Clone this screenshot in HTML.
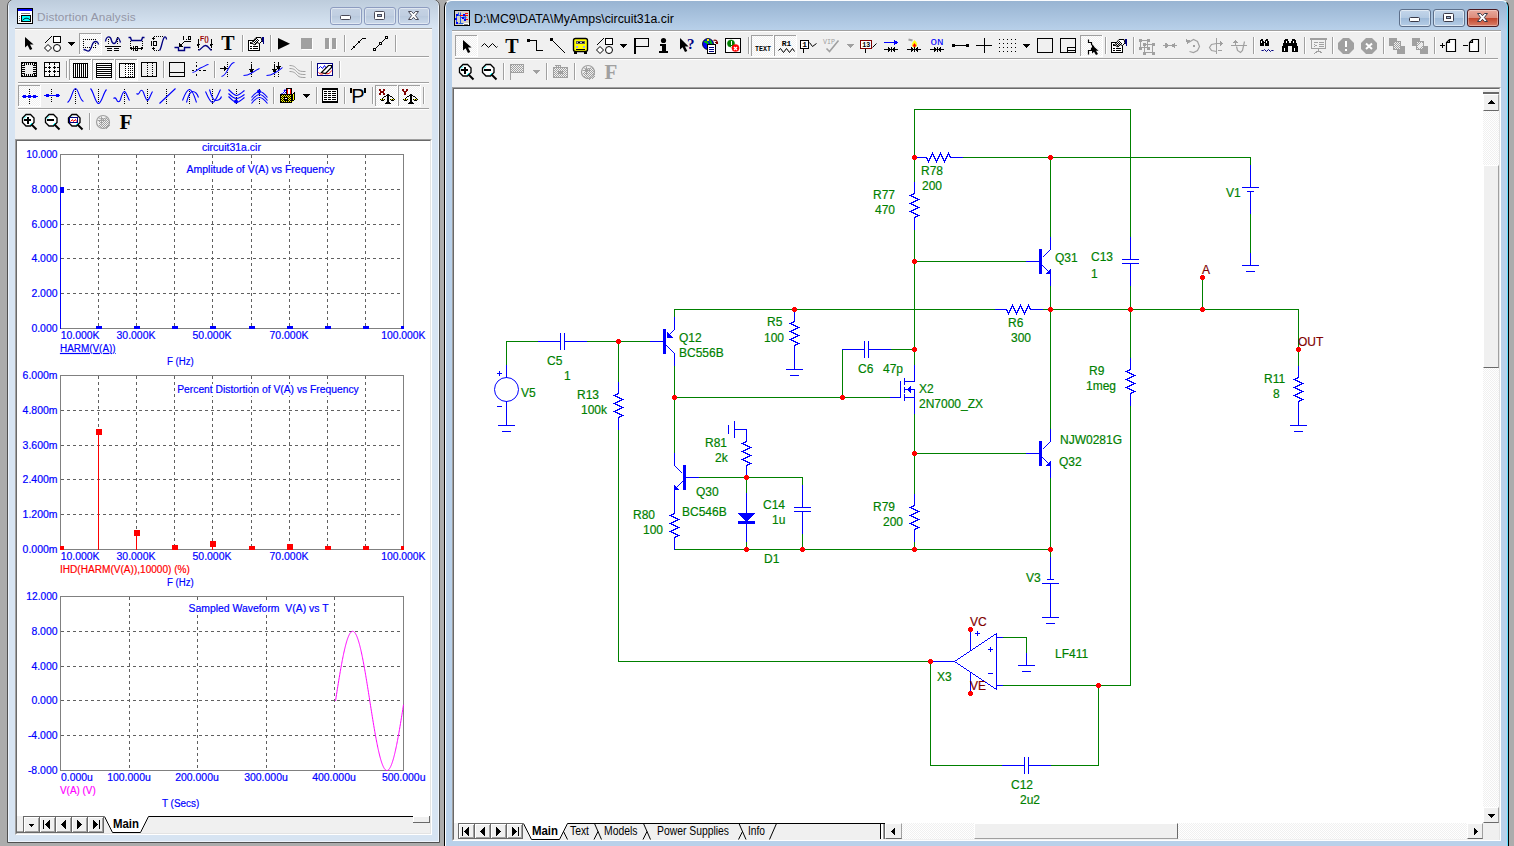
<!DOCTYPE html><html><head><meta charset="utf-8"><title>Micro-Cap</title><style>
*{box-sizing:border-box}
html,body{margin:0;padding:0}
body{width:1514px;height:846px;background:#acacac;overflow:hidden;position:relative;font-family:"Liberation Sans",sans-serif}
.abs{position:absolute}
#lw{left:7px;top:-1px;width:433px;height:844px;border:1px solid #505050;border-radius:7px 7px 0 0;background:#d7e4f2;box-shadow:inset 0 0 0 1px #eef4fc}
#lwt{left:1px;top:0;width:429px;height:29px;background:linear-gradient(#bdccdc,#d9e6f4);border-radius:5px 5px 0 0}
#rw{left:444px;top:0px;width:1065px;height:860px;border:1px solid #000;border-top-color:#fafcfe;border-radius:7px 7px 0 0;background:#b9d1ea;box-shadow:inset 1px 0 0 #fff,inset -1px 0 0 #5fe0ff}
#rwt{left:1px;top:0;width:1061px;height:30px;background:linear-gradient(#98b4d2,#b9d1ea);border-radius:6px 6px 0 0}
.tb{background:#f0f0f0}
.ttl{font-size:12px;white-space:nowrap}
.cb{border:1px solid #7b8aa0;border-radius:3px}
.sbtn{background:#f0f0f0;border:1px solid;border-color:#fff #a0a0a0 #696969 #fff}
.nbtn{background:#f0f0f0;border:1px solid #696969;box-shadow:inset 1px 1px 0 #fff,inset -1px -1px 0 #a0a0a0}
.track{background-color:#f7f7f7;background-image:conic-gradient(#fff 25%,#f0f0f0 0 50%,#fff 0 75%,#f0f0f0 0);background-size:2px 2px}
</style></head><body>
<div id="lw" class="abs"><div id="lwt" class="abs"></div></div>
<div class="abs ttl" style="left:37px;top:10px;color:#9496a6;font-size:11.8px;letter-spacing:0.12px">Distortion Analysis</div>
<div class="abs cb" style="left:330px;top:7px;width:32px;height:18px;background:linear-gradient(#c6d3e4,#c0cee1 50%,#b9c9dd 50%,#cbd9ea);border-color:#8d9cc0;box-shadow:inset 0 0 0 1px rgba(255,255,255,.45)"></div>
<div class="abs cb" style="left:364px;top:7px;width:32px;height:18px;background:linear-gradient(#c6d3e4,#c0cee1 50%,#b9c9dd 50%,#cbd9ea);border-color:#8d9cc0;box-shadow:inset 0 0 0 1px rgba(255,255,255,.45)"></div>
<div class="abs cb" style="left:398px;top:7px;width:32px;height:18px;background:linear-gradient(#c6d3e4,#c0cee1 50%,#b9c9dd 50%,#cbd9ea);border-color:#8d9cc0;box-shadow:inset 0 0 0 1px rgba(255,255,255,.45)"></div>
<div class="abs tb" style="left:15px;top:28px;width:417px;height:807px;border-top:1px solid #a0a0a0;box-shadow:inset 0 1px 0 #fff"></div>
<div class="abs" style="left:18px;top:56px;width:411px;height:2px;background:#a0a0a0;border-bottom:1px solid #fff"></div>
<div class="abs" style="left:18px;top:82px;width:411px;height:2px;background:#a0a0a0;border-bottom:1px solid #fff"></div>
<div class="abs" style="left:18px;top:108px;width:411px;height:2px;background:#a0a0a0;border-bottom:1px solid #fff"></div>
<div class="abs" style="left:15px;top:139px;width:417px;height:696px;background:#fff;border:1px solid;border-color:#a0a0a0 #fff #fff #a0a0a0"></div>
<div class="abs" style="left:16px;top:140px;width:415px;height:694px;border:1px solid;border-color:#696969 #e3e3e3 #e3e3e3 #696969"></div>
<div class="abs tb" style="left:17px;top:816px;width:413px;height:17px"></div>
<div class="abs nbtn" style="left:23px;top:816px;width:17px;height:17px"></div>
<div class="abs nbtn" style="left:39px;top:816px;width:17px;height:17px"></div>
<div class="abs nbtn" style="left:55px;top:816px;width:17px;height:17px"></div>
<div class="abs nbtn" style="left:71px;top:816px;width:17px;height:17px"></div>
<div class="abs nbtn" style="left:87px;top:816px;width:17px;height:17px"></div>
<div id="rw" class="abs"><div id="rwt" class="abs"></div></div>
<div class="abs ttl" style="left:474px;top:12px;color:#000;font-size:12.3px">D:\MC9\DATA\MyAmps\circuit31a.cir</div>
<div class="abs cb" style="left:1399px;top:9px;width:32px;height:18px;background:linear-gradient(#c4d6ea,#b2c9e2 50%,#9db9d8 50%,#b6cde6);border-color:#5d6f8a;box-shadow:inset 0 0 0 1px rgba(255,255,255,.5)"></div>
<div class="abs cb" style="left:1433px;top:9px;width:32px;height:18px;background:linear-gradient(#c4d6ea,#b2c9e2 50%,#9db9d8 50%,#b6cde6);border-color:#5d6f8a;box-shadow:inset 0 0 0 1px rgba(255,255,255,.5)"></div>
<div class="abs cb" style="left:1467px;top:9px;width:32px;height:18px;background:linear-gradient(#e9a99c,#dc8a79 50%,#c2442a 50%,#d9806a);border-color:#4a1a22;box-shadow:inset 0 0 0 1px rgba(255,255,255,.35)"></div>
<div class="abs tb" style="left:452px;top:30px;width:1049px;height:811px;border-top:1px solid #a0a0a0;border-bottom:1px solid #fff;box-shadow:inset 0 1px 0 #fff"></div>
<div class="abs" style="left:455px;top:58px;width:1043px;height:2px;background:#a0a0a0;border-bottom:1px solid #fff"></div>
<div class="abs" style="left:452px;top:87px;width:1049px;height:754px;background:#fff;border:1px solid;border-color:#a0a0a0 #fff #fff #a0a0a0"></div>
<div class="abs" style="left:453px;top:88px;width:1047px;height:752px;border:1px solid;border-color:#696969 #e3e3e3 #e3e3e3 #696969"></div>
<div class="abs track" style="left:1483px;top:89px;width:16px;height:734px"></div>
<div class="abs" style="left:1483px;top:89px;width:16px;height:5px;background:#f0f0f0;border-bottom:2px solid #696969;border-top:1px solid #fff"></div>
<div class="abs sbtn" style="left:1483px;top:94px;width:16px;height:17px"></div>
<div class="abs sbtn" style="left:1483px;top:165px;width:16px;height:203px"></div>
<div class="abs sbtn" style="left:1483px;top:807px;width:16px;height:16px"></div>
<div class="abs tb" style="left:454px;top:823px;width:1045px;height:17px"></div>
<div class="abs nbtn" style="left:458px;top:823px;width:17px;height:16px"></div>
<div class="abs nbtn" style="left:474px;top:823px;width:17px;height:16px"></div>
<div class="abs nbtn" style="left:490px;top:823px;width:17px;height:16px"></div>
<div class="abs nbtn" style="left:506px;top:823px;width:17px;height:16px"></div>
<div class="abs track" style="left:885px;top:823px;width:598px;height:16px"></div>
<div class="abs sbtn" style="left:885px;top:823px;width:17px;height:16px"></div>
<div class="abs sbtn" style="left:1467px;top:823px;width:16px;height:16px"></div>
<div class="abs sbtn" style="left:974px;top:823px;width:204px;height:16px;border-color:#fff #696969 #a0a0a0 #fff"></div>
<svg class="abs" style="left:0;top:0" width="1514" height="846" viewBox="0 0 1514 846">
<g shape-rendering="crispEdges"><line x1="98.5" y1="155" x2="98.5" y2="328" stroke="#606060" stroke-width="1" stroke-dasharray="3 3"/><line x1="136.5" y1="155" x2="136.5" y2="328" stroke="#606060" stroke-width="1" stroke-dasharray="3 3"/><line x1="174.5" y1="155" x2="174.5" y2="328" stroke="#606060" stroke-width="1" stroke-dasharray="3 3"/><line x1="212.5" y1="155" x2="212.5" y2="328" stroke="#606060" stroke-width="1" stroke-dasharray="3 3"/><line x1="251.5" y1="155" x2="251.5" y2="328" stroke="#606060" stroke-width="1" stroke-dasharray="3 3"/><line x1="289.5" y1="155" x2="289.5" y2="328" stroke="#606060" stroke-width="1" stroke-dasharray="3 3"/><line x1="327.5" y1="155" x2="327.5" y2="328" stroke="#606060" stroke-width="1" stroke-dasharray="3 3"/><line x1="365.5" y1="155" x2="365.5" y2="328" stroke="#606060" stroke-width="1" stroke-dasharray="3 3"/><line x1="61" y1="189.5" x2="403" y2="189.5" stroke="#606060" stroke-width="1" stroke-dasharray="3 3"/><line x1="61" y1="224.5" x2="403" y2="224.5" stroke="#606060" stroke-width="1" stroke-dasharray="3 3"/><line x1="61" y1="258.5" x2="403" y2="258.5" stroke="#606060" stroke-width="1" stroke-dasharray="3 3"/><line x1="61" y1="293.5" x2="403" y2="293.5" stroke="#606060" stroke-width="1" stroke-dasharray="3 3"/><rect x="60.5" y="154.5" width="343" height="174" fill="none" stroke="#808080" stroke-width="1"/><line x1="98.5" y1="376" x2="98.5" y2="549" stroke="#606060" stroke-width="1" stroke-dasharray="3 3"/><line x1="136.5" y1="376" x2="136.5" y2="549" stroke="#606060" stroke-width="1" stroke-dasharray="3 3"/><line x1="174.5" y1="376" x2="174.5" y2="549" stroke="#606060" stroke-width="1" stroke-dasharray="3 3"/><line x1="212.5" y1="376" x2="212.5" y2="549" stroke="#606060" stroke-width="1" stroke-dasharray="3 3"/><line x1="251.5" y1="376" x2="251.5" y2="549" stroke="#606060" stroke-width="1" stroke-dasharray="3 3"/><line x1="289.5" y1="376" x2="289.5" y2="549" stroke="#606060" stroke-width="1" stroke-dasharray="3 3"/><line x1="327.5" y1="376" x2="327.5" y2="549" stroke="#606060" stroke-width="1" stroke-dasharray="3 3"/><line x1="365.5" y1="376" x2="365.5" y2="549" stroke="#606060" stroke-width="1" stroke-dasharray="3 3"/><line x1="61" y1="410.5" x2="403" y2="410.5" stroke="#606060" stroke-width="1" stroke-dasharray="3 3"/><line x1="61" y1="445.5" x2="403" y2="445.5" stroke="#606060" stroke-width="1" stroke-dasharray="3 3"/><line x1="61" y1="479.5" x2="403" y2="479.5" stroke="#606060" stroke-width="1" stroke-dasharray="3 3"/><line x1="61" y1="514.5" x2="403" y2="514.5" stroke="#606060" stroke-width="1" stroke-dasharray="3 3"/><rect x="60.5" y="375.5" width="343" height="174" fill="none" stroke="#808080" stroke-width="1"/><line x1="129.5" y1="597" x2="129.5" y2="770" stroke="#606060" stroke-width="1" stroke-dasharray="3 3"/><line x1="197.5" y1="597" x2="197.5" y2="770" stroke="#606060" stroke-width="1" stroke-dasharray="3 3"/><line x1="266.5" y1="597" x2="266.5" y2="770" stroke="#606060" stroke-width="1" stroke-dasharray="3 3"/><line x1="334.5" y1="597" x2="334.5" y2="770" stroke="#606060" stroke-width="1" stroke-dasharray="3 3"/><line x1="61" y1="631.5" x2="403" y2="631.5" stroke="#606060" stroke-width="1" stroke-dasharray="3 3"/><line x1="61" y1="666.5" x2="403" y2="666.5" stroke="#606060" stroke-width="1" stroke-dasharray="3 3"/><line x1="61" y1="700.5" x2="403" y2="700.5" stroke="#606060" stroke-width="1" stroke-dasharray="3 3"/><line x1="61" y1="735.5" x2="403" y2="735.5" stroke="#606060" stroke-width="1" stroke-dasharray="3 3"/><rect x="60.5" y="596.5" width="343" height="174" fill="none" stroke="#808080" stroke-width="1"/><clipPath id="c1"><rect x="60" y="154" width="344" height="175"/></clipPath><g clip-path="url(#c1)"><rect x="60" y="190" width="1" height="139" fill="#0000ff"/><rect x="58" y="187" width="6" height="6" fill="#0000ff"/><rect x="96" y="326" width="6" height="6" fill="#0000ff"/><rect x="134" y="326" width="6" height="6" fill="#0000ff"/><rect x="172" y="326" width="6" height="6" fill="#0000ff"/><rect x="210" y="326" width="6" height="6" fill="#0000ff"/><rect x="249" y="326" width="6" height="6" fill="#0000ff"/><rect x="287" y="326" width="6" height="6" fill="#0000ff"/><rect x="325" y="326" width="6" height="6" fill="#0000ff"/><rect x="363" y="326" width="6" height="6" fill="#0000ff"/><rect x="401" y="326" width="6" height="6" fill="#0000ff"/></g><clipPath id="c2"><rect x="60" y="375" width="344" height="175"/></clipPath><g clip-path="url(#c2)"><rect x="60" y="549" width="1" height="1" fill="#ff0000"/><rect x="58" y="546" width="6" height="6" fill="#ff0000"/><rect x="98" y="432" width="1" height="118" fill="#ff0000"/><rect x="96" y="429" width="6" height="6" fill="#ff0000"/><rect x="136" y="533" width="1" height="17" fill="#ff0000"/><rect x="134" y="530" width="6" height="6" fill="#ff0000"/><rect x="174" y="548" width="1" height="2" fill="#ff0000"/><rect x="172" y="545" width="6" height="6" fill="#ff0000"/><rect x="212" y="544" width="1" height="6" fill="#ff0000"/><rect x="210" y="541" width="6" height="6" fill="#ff0000"/><rect x="251" y="549" width="1" height="1" fill="#ff0000"/><rect x="249" y="546" width="6" height="6" fill="#ff0000"/><rect x="289" y="547" width="1" height="3" fill="#ff0000"/><rect x="287" y="544" width="6" height="6" fill="#ff0000"/><rect x="327" y="549" width="1" height="1" fill="#ff0000"/><rect x="325" y="546" width="6" height="6" fill="#ff0000"/><rect x="365" y="549" width="1" height="1" fill="#ff0000"/><rect x="363" y="546" width="6" height="6" fill="#ff0000"/><rect x="403" y="549" width="1" height="1" fill="#ff0000"/><rect x="401" y="546" width="6" height="6" fill="#ff0000"/></g><polyline points="335.50,700.90 335.75,699.31 336.00,697.71 336.25,696.12 336.50,694.53 336.75,692.95 337.00,691.37 337.25,689.79 337.50,688.22 337.75,686.66 338.00,685.10 338.25,683.55 338.50,682.02 338.75,680.49 339.00,678.97 339.25,677.46 339.50,675.97 339.75,674.49 340.00,673.02 340.25,671.57 340.50,670.13 340.75,668.71 341.00,667.30 341.25,665.92 341.50,664.55 341.75,663.20 342.00,661.87 342.25,660.56 342.50,659.27 342.75,658.01 343.00,656.76 343.25,655.54 343.50,654.34 343.75,653.17 344.00,652.02 344.25,650.90 344.50,649.81 344.75,648.74 345.00,647.70 345.25,646.68 345.50,645.70 345.75,644.74 346.00,643.82 346.25,642.92 346.50,642.05 346.75,641.22 347.00,640.41 347.25,639.64 347.50,638.90 347.75,638.19 348.00,637.52 348.25,636.88 348.50,636.27 348.75,635.69 349.00,635.15 349.25,634.65 349.50,634.18 349.75,633.74 350.00,633.34 350.25,632.97 350.50,632.65 350.75,632.35 351.00,632.09 351.25,631.87 351.50,631.69 351.75,631.54 352.00,631.42 352.25,631.35 352.50,631.31 352.75,631.30 353.00,631.34 353.25,631.41 353.50,631.51 353.75,631.65 354.00,631.83 354.25,632.05 354.50,632.30 354.75,632.58 355.00,632.91 355.25,633.26 355.50,633.66 355.75,634.09 356.00,634.55 356.25,635.05 356.50,635.58 356.75,636.15 357.00,636.75 357.25,637.39 357.50,638.05 357.75,638.76 358.00,639.49 358.25,640.26 358.50,641.05 358.75,641.88 359.00,642.74 359.25,643.63 359.50,644.55 359.75,645.51 360.00,646.48 360.25,647.49 360.50,648.53 360.75,649.59 361.00,650.68 361.25,651.80 361.50,652.94 361.75,654.11 362.00,655.30 362.25,656.52 362.50,657.75 362.75,659.02 363.00,660.30 363.25,661.61 363.50,662.93 363.75,664.28 364.00,665.64 364.25,667.02 364.50,668.43 364.75,669.84 365.00,671.28 365.25,672.73 365.50,674.19 365.75,675.67 366.00,677.16 366.25,678.67 366.50,680.18 366.75,681.71 367.00,683.25 367.25,684.79 367.50,686.35 367.75,687.91 368.00,689.48 368.25,691.05 368.50,692.63 368.75,694.22 369.00,695.80 369.25,697.40 369.50,698.99 369.75,700.58 370.00,702.17 370.25,703.77 370.50,705.36 370.75,706.95 371.00,708.53 371.25,710.12 371.50,711.69 371.75,713.26 372.00,714.83 372.25,716.39 372.50,717.94 372.75,719.48 373.00,721.01 373.25,722.53 373.50,724.04 373.75,725.53 374.00,727.02 374.25,728.49 374.50,729.94 374.75,731.39 375.00,732.81 375.25,734.22 375.50,735.61 375.75,736.98 376.00,738.33 376.25,739.67 376.50,740.98 376.75,742.27 377.00,743.54 377.25,744.79 377.50,746.02 377.75,747.22 378.00,748.40 378.25,749.55 378.50,750.67 378.75,751.78 379.00,752.85 379.25,753.90 379.50,754.92 379.75,755.91 380.00,756.87 380.25,757.80 380.50,758.70 380.75,759.58 381.00,760.42 381.25,761.23 381.50,762.01 381.75,762.75 382.00,763.47 382.25,764.15 382.50,764.80 382.75,765.41 383.00,765.99 383.25,766.54 383.50,767.05 383.75,767.53 384.00,767.97 384.25,768.38 384.50,768.75 384.75,769.09 385.00,769.39 385.25,769.66 385.50,769.89 385.75,770.08 386.00,770.24 386.25,770.36 386.50,770.44 386.75,770.49 387.00,770.50 387.25,770.47 387.50,770.41 387.75,770.31 388.00,770.18 388.25,770.01 388.50,769.80 388.75,769.56 389.00,769.28 389.25,768.96 389.50,768.61 389.75,768.22 390.00,767.80 390.25,767.34 390.50,766.85 390.75,766.33 391.00,765.77 391.25,765.17 391.50,764.54 391.75,763.88 392.00,763.19 392.25,762.46 392.50,761.70 392.75,760.91 393.00,760.08 393.25,759.23 393.50,758.35 393.75,757.43 394.00,756.49 394.25,755.51 394.50,754.51 394.75,753.48 395.00,752.42 395.25,751.34 395.50,750.23 395.75,749.09 396.00,747.93 396.25,746.74 396.50,745.53 396.75,744.29 397.00,743.04 397.25,741.76 397.50,740.46 397.75,739.14 398.00,737.79 398.25,736.43 398.50,735.05 398.75,733.66 399.00,732.24 399.25,730.81 399.50,729.36 399.75,727.90 400.00,726.43 400.25,724.94 400.50,723.44 400.75,721.92 401.00,720.40 401.25,718.86 401.50,717.32 401.75,715.77 402.00,714.20 402.25,712.64 402.50,711.06 402.75,709.48 403.00,707.90 403.25,706.31 403.50,704.72" fill="none" stroke="#ff00ff" stroke-width="1" shape-rendering="auto"/></g><g font-family="Liberation Sans, sans-serif"><text x="57.5" y="158" fill="#0000ff" font-size="10" text-anchor="end" font-weight="normal"  textLength="31.2" lengthAdjust="spacingAndGlyphs" stroke="#0000ff" stroke-width="0.18">10.000</text><text x="57.5" y="193" fill="#0000ff" font-size="10" text-anchor="end" font-weight="normal"  textLength="26.1" lengthAdjust="spacingAndGlyphs" stroke="#0000ff" stroke-width="0.18">8.000</text><text x="57.5" y="228" fill="#0000ff" font-size="10" text-anchor="end" font-weight="normal"  textLength="26.1" lengthAdjust="spacingAndGlyphs" stroke="#0000ff" stroke-width="0.18">6.000</text><text x="57.5" y="262" fill="#0000ff" font-size="10" text-anchor="end" font-weight="normal"  textLength="26.1" lengthAdjust="spacingAndGlyphs" stroke="#0000ff" stroke-width="0.18">4.000</text><text x="57.5" y="297" fill="#0000ff" font-size="10" text-anchor="end" font-weight="normal"  textLength="26.1" lengthAdjust="spacingAndGlyphs" stroke="#0000ff" stroke-width="0.18">2.000</text><text x="57.5" y="332" fill="#0000ff" font-size="10" text-anchor="end" font-weight="normal"  textLength="26.1" lengthAdjust="spacingAndGlyphs" stroke="#0000ff" stroke-width="0.18">0.000</text><text x="57.5" y="379" fill="#0000ff" font-size="10" text-anchor="end" font-weight="normal"  textLength="34.9" lengthAdjust="spacingAndGlyphs" stroke="#0000ff" stroke-width="0.18">6.000m</text><text x="57.5" y="414" fill="#0000ff" font-size="10" text-anchor="end" font-weight="normal"  textLength="34.9" lengthAdjust="spacingAndGlyphs" stroke="#0000ff" stroke-width="0.18">4.800m</text><text x="57.5" y="449" fill="#0000ff" font-size="10" text-anchor="end" font-weight="normal"  textLength="34.9" lengthAdjust="spacingAndGlyphs" stroke="#0000ff" stroke-width="0.18">3.600m</text><text x="57.5" y="483" fill="#0000ff" font-size="10" text-anchor="end" font-weight="normal"  textLength="34.9" lengthAdjust="spacingAndGlyphs" stroke="#0000ff" stroke-width="0.18">2.400m</text><text x="57.5" y="518" fill="#0000ff" font-size="10" text-anchor="end" font-weight="normal"  textLength="34.9" lengthAdjust="spacingAndGlyphs" stroke="#0000ff" stroke-width="0.18">1.200m</text><text x="57.5" y="553" fill="#0000ff" font-size="10" text-anchor="end" font-weight="normal"  textLength="34.9" lengthAdjust="spacingAndGlyphs" stroke="#0000ff" stroke-width="0.18">0.000m</text><text x="57.5" y="600" fill="#0000ff" font-size="10" text-anchor="end" font-weight="normal"  textLength="31.2" lengthAdjust="spacingAndGlyphs" stroke="#0000ff" stroke-width="0.18">12.000</text><text x="57.5" y="635" fill="#0000ff" font-size="10" text-anchor="end" font-weight="normal"  textLength="26.1" lengthAdjust="spacingAndGlyphs" stroke="#0000ff" stroke-width="0.18">8.000</text><text x="57.5" y="670" fill="#0000ff" font-size="10" text-anchor="end" font-weight="normal"  textLength="26.1" lengthAdjust="spacingAndGlyphs" stroke="#0000ff" stroke-width="0.18">4.000</text><text x="57.5" y="704" fill="#0000ff" font-size="10" text-anchor="end" font-weight="normal"  textLength="26.1" lengthAdjust="spacingAndGlyphs" stroke="#0000ff" stroke-width="0.18">0.000</text><text x="57.5" y="739" fill="#0000ff" font-size="10" text-anchor="end" font-weight="normal"  textLength="29.6" lengthAdjust="spacingAndGlyphs" stroke="#0000ff" stroke-width="0.18">-4.000</text><text x="57.5" y="774" fill="#0000ff" font-size="10" text-anchor="end" font-weight="normal"  textLength="29.6" lengthAdjust="spacingAndGlyphs" stroke="#0000ff" stroke-width="0.18">-8.000</text><text x="60.7" y="339" fill="#0000ff" font-size="10" text-anchor="start" font-weight="normal"  textLength="38.9" lengthAdjust="spacingAndGlyphs" stroke="#0000ff" stroke-width="0.18">10.000K</text><text x="136" y="339" fill="#0000ff" font-size="10" text-anchor="middle" font-weight="normal"  textLength="38.9" lengthAdjust="spacingAndGlyphs" stroke="#0000ff" stroke-width="0.18">30.000K</text><text x="212" y="339" fill="#0000ff" font-size="10" text-anchor="middle" font-weight="normal"  textLength="38.9" lengthAdjust="spacingAndGlyphs" stroke="#0000ff" stroke-width="0.18">50.000K</text><text x="289" y="339" fill="#0000ff" font-size="10" text-anchor="middle" font-weight="normal"  textLength="38.9" lengthAdjust="spacingAndGlyphs" stroke="#0000ff" stroke-width="0.18">70.000K</text><text x="425.5" y="339" fill="#0000ff" font-size="10" text-anchor="end" font-weight="normal"  textLength="44.3" lengthAdjust="spacingAndGlyphs" stroke="#0000ff" stroke-width="0.18">100.000K</text><text x="60.7" y="560" fill="#0000ff" font-size="10" text-anchor="start" font-weight="normal"  textLength="38.9" lengthAdjust="spacingAndGlyphs" stroke="#0000ff" stroke-width="0.18">10.000K</text><text x="136" y="560" fill="#0000ff" font-size="10" text-anchor="middle" font-weight="normal"  textLength="38.9" lengthAdjust="spacingAndGlyphs" stroke="#0000ff" stroke-width="0.18">30.000K</text><text x="212" y="560" fill="#0000ff" font-size="10" text-anchor="middle" font-weight="normal"  textLength="38.9" lengthAdjust="spacingAndGlyphs" stroke="#0000ff" stroke-width="0.18">50.000K</text><text x="289" y="560" fill="#0000ff" font-size="10" text-anchor="middle" font-weight="normal"  textLength="38.9" lengthAdjust="spacingAndGlyphs" stroke="#0000ff" stroke-width="0.18">70.000K</text><text x="425.5" y="560" fill="#0000ff" font-size="10" text-anchor="end" font-weight="normal"  textLength="44.3" lengthAdjust="spacingAndGlyphs" stroke="#0000ff" stroke-width="0.18">100.000K</text><text x="61" y="781" fill="#0000ff" font-size="10" text-anchor="start" font-weight="normal"  textLength="31.8" lengthAdjust="spacingAndGlyphs" stroke="#0000ff" stroke-width="0.18">0.000u</text><text x="129" y="781" fill="#0000ff" font-size="10" text-anchor="middle" font-weight="normal"  textLength="43.6" lengthAdjust="spacingAndGlyphs" stroke="#0000ff" stroke-width="0.18">100.000u</text><text x="197" y="781" fill="#0000ff" font-size="10" text-anchor="middle" font-weight="normal"  textLength="43.6" lengthAdjust="spacingAndGlyphs" stroke="#0000ff" stroke-width="0.18">200.000u</text><text x="266" y="781" fill="#0000ff" font-size="10" text-anchor="middle" font-weight="normal"  textLength="43.6" lengthAdjust="spacingAndGlyphs" stroke="#0000ff" stroke-width="0.18">300.000u</text><text x="334" y="781" fill="#0000ff" font-size="10" text-anchor="middle" font-weight="normal"  textLength="43.6" lengthAdjust="spacingAndGlyphs" stroke="#0000ff" stroke-width="0.18">400.000u</text><text x="425.5" y="781" fill="#0000ff" font-size="10" text-anchor="end" font-weight="normal"  textLength="43.6" lengthAdjust="spacingAndGlyphs" stroke="#0000ff" stroke-width="0.18">500.000u</text><text x="231.5" y="151" fill="#0000ff" font-size="10" text-anchor="middle" font-weight="normal"  textLength="58.9" lengthAdjust="spacingAndGlyphs" stroke="#0000ff" stroke-width="0.18">circuit31a.cir</text><rect x="186" y="164" width="149" height="12" fill="#fff"/><text x="260.5" y="173" fill="#0000ff" font-size="10" text-anchor="middle" font-weight="normal"  textLength="148.0" lengthAdjust="spacingAndGlyphs" stroke="#0000ff" stroke-width="0.18">Amplitude of V(A) vs Frequency</text><rect x="177" y="384" width="183" height="12" fill="#fff"/><text x="268" y="393" fill="#0000ff" font-size="10" text-anchor="middle" font-weight="normal"  textLength="181.6" lengthAdjust="spacingAndGlyphs" stroke="#0000ff" stroke-width="0.18">Percent Distortion of V(A) vs Frequency</text><rect x="188" y="603" width="141" height="12" fill="#fff"/><text x="258.5" y="612" fill="#0000ff" font-size="10" text-anchor="middle" font-weight="normal" xml:space="preserve" textLength="140.0" lengthAdjust="spacingAndGlyphs" stroke="#0000ff" stroke-width="0.18">Sampled Waveform  V(A) vs T</text><text x="60" y="352" fill="#0000ff" font-size="10" text-anchor="start" font-weight="normal" text-decoration="underline" textLength="55.6" lengthAdjust="spacingAndGlyphs" stroke="#0000ff" stroke-width="0.18">HARM(V(A))</text><text x="167" y="365" fill="#0000ff" font-size="10" text-anchor="start" font-weight="normal"  textLength="26.7" lengthAdjust="spacingAndGlyphs" stroke="#0000ff" stroke-width="0.18">F (Hz)</text><text x="167" y="586" fill="#0000ff" font-size="10" text-anchor="start" font-weight="normal"  textLength="26.7" lengthAdjust="spacingAndGlyphs" stroke="#0000ff" stroke-width="0.18">F (Hz)</text><text x="162" y="807" fill="#0000ff" font-size="10" text-anchor="start" font-weight="normal"  textLength="37.2" lengthAdjust="spacingAndGlyphs" stroke="#0000ff" stroke-width="0.18">T (Secs)</text><text x="60" y="573" fill="#ff0000" font-size="10" text-anchor="start" font-weight="normal"  textLength="129.9" lengthAdjust="spacingAndGlyphs" stroke="#ff0000" stroke-width="0.18">IHD(HARM(V(A)),10000) (%)</text><text x="60" y="794" fill="#ff00ff" font-size="10" text-anchor="start" font-weight="normal"  textLength="35.7" lengthAdjust="spacingAndGlyphs" stroke="#ff00ff" stroke-width="0.18">V(A) (V)</text></g>
<g shape-rendering="crispEdges"><rect x="914" y="109" width="217" height="1" fill="#008000"/><rect x="914" y="109" width="1" height="73" fill="#008000"/><rect x="1130" y="109" width="1" height="129" fill="#008000"/><rect x="962" y="157" width="289" height="1" fill="#008000"/><rect x="1250" y="157" width="1" height="9" fill="#008000"/><rect x="1050" y="157" width="1" height="81" fill="#008000"/><rect x="914" y="229" width="1" height="137" fill="#008000"/><rect x="914" y="261" width="113" height="1" fill="#008000"/><rect x="1050" y="285" width="1" height="145" fill="#008000"/><rect x="1130" y="285" width="1" height="73" fill="#008000"/><rect x="1130" y="405" width="1" height="281" fill="#008000"/><rect x="674" y="309" width="321" height="1" fill="#008000"/><rect x="1042" y="309" width="257" height="1" fill="#008000"/><rect x="1298" y="309" width="1" height="57" fill="#008000"/><rect x="674" y="309" width="1" height="9" fill="#008000"/><rect x="1202" y="277" width="1" height="33" fill="#008000"/><rect x="1250" y="213" width="1" height="41" fill="#008000"/><rect x="506" y="341" width="33" height="1" fill="#008000"/><rect x="506" y="341" width="1" height="25" fill="#008000"/><rect x="586" y="341" width="65" height="1" fill="#008000"/><rect x="618" y="341" width="1" height="41" fill="#008000"/><rect x="618" y="429" width="1" height="233" fill="#008000"/><rect x="618" y="661" width="337" height="1" fill="#008000"/><rect x="674" y="365" width="1" height="89" fill="#008000"/><rect x="674" y="397" width="217" height="1" fill="#008000"/><rect x="842" y="349" width="1" height="49" fill="#008000"/><rect x="890" y="349" width="25" height="1" fill="#008000"/><rect x="914" y="413" width="1" height="81" fill="#008000"/><rect x="914" y="453" width="113" height="1" fill="#008000"/><rect x="914" y="541" width="1" height="9" fill="#008000"/><rect x="1050" y="477" width="1" height="81" fill="#008000"/><rect x="698" y="477" width="105" height="1" fill="#008000"/><rect x="802" y="477" width="1" height="9" fill="#008000"/><rect x="802" y="533" width="1" height="17" fill="#008000"/><rect x="746" y="477" width="1" height="17" fill="#008000"/><rect x="746" y="541" width="1" height="9" fill="#008000"/><rect x="674" y="549" width="377" height="1" fill="#008000"/><rect x="930" y="661" width="1" height="105" fill="#008000"/><rect x="930" y="765" width="73" height="1" fill="#008000"/><rect x="1050" y="765" width="49" height="1" fill="#008000"/><rect x="1098" y="685" width="1" height="81" fill="#008000"/><rect x="1002" y="685" width="129" height="1" fill="#008000"/><rect x="1002" y="637" width="25" height="1" fill="#008000"/><rect x="1026" y="637" width="1" height="17" fill="#008000"/><polyline points="914.5,157.5 926.5,157.5 928.5,161.5 932.5,153.5 936.5,161.5 940.5,153.5 944.5,161.5 948.5,153.5 950.5,157.5 962.5,157.5" fill="none" stroke="#0000ff" stroke-width="1"/><polyline points="914.5,181.5 914.5,193.5 910.5,195.5 918.5,199.5 910.5,203.5 918.5,207.5 910.5,211.5 918.5,215.5 914.5,217.5 914.5,229.5" fill="none" stroke="#0000ff" stroke-width="1"/><rect x="1050" y="237" width="1" height="13" fill="#0000ff"/><rect x="1050" y="273" width="1" height="13" fill="#0000ff"/><rect x="1039" y="249" width="3" height="25" fill="#0000ff"/><rect x="1026" y="261" width="14" height="1" fill="#0000ff"/><polyline points="1042.5,257.5 1050.5,249.5" fill="none" stroke="#0000ff" stroke-width="1"/><polyline points="1042.5,265.5 1050.5,273.5" fill="none" stroke="#0000ff" stroke-width="1"/><polygon points="1051,268.4 1051,274 1045.4,274" fill="#0000ff"/><rect x="1130" y="237" width="1" height="23" fill="#0000ff"/><rect x="1130" y="263" width="1" height="23" fill="#0000ff"/><rect x="1122" y="259" width="17" height="1" fill="#0000ff"/><rect x="1122" y="263" width="17" height="1" fill="#0000ff"/><rect x="1250" y="165" width="1" height="23" fill="#0000ff"/><rect x="1250" y="191" width="1" height="23" fill="#0000ff"/><rect x="1242" y="187" width="17" height="1" fill="#0000ff"/><rect x="1247" y="191" width="7" height="1" fill="#0000ff"/><rect x="1250" y="253" width="1" height="13" fill="#0000ff"/><rect x="1242" y="265" width="17" height="1" fill="#0000ff"/><rect x="1246" y="271" width="9" height="1" fill="#0000ff"/><polyline points="994.5,309.5 1006.5,309.5 1008.5,313.5 1012.5,305.5 1016.5,313.5 1020.5,305.5 1024.5,313.5 1028.5,305.5 1030.5,309.5 1042.5,309.5" fill="none" stroke="#0000ff" stroke-width="1"/><polyline points="1130.5,357.5 1130.5,369.5 1126.5,371.5 1134.5,375.5 1126.5,379.5 1134.5,383.5 1126.5,387.5 1134.5,391.5 1130.5,393.5 1130.5,405.5" fill="none" stroke="#0000ff" stroke-width="1"/><polyline points="1298.5,365.5 1298.5,377.5 1294.5,379.5 1302.5,383.5 1294.5,387.5 1302.5,391.5 1294.5,395.5 1302.5,399.5 1298.5,401.5 1298.5,413.5" fill="none" stroke="#0000ff" stroke-width="1"/><rect x="1298" y="413" width="1" height="13" fill="#0000ff"/><rect x="1290" y="425" width="17" height="1" fill="#0000ff"/><rect x="1294" y="431" width="9" height="1" fill="#0000ff"/><polyline points="794.5,309.5 794.5,321.5 790.5,323.5 798.5,327.5 790.5,331.5 798.5,335.5 790.5,339.5 798.5,343.5 794.5,345.5 794.5,357.5" fill="none" stroke="#0000ff" stroke-width="1"/><rect x="794" y="357" width="1" height="13" fill="#0000ff"/><rect x="786" y="369" width="17" height="1" fill="#0000ff"/><rect x="790" y="375" width="9" height="1" fill="#0000ff"/><rect x="674" y="317" width="1" height="13" fill="#0000ff"/><rect x="674" y="353" width="1" height="13" fill="#0000ff"/><rect x="663" y="329" width="3" height="25" fill="#0000ff"/><rect x="650" y="341" width="14" height="1" fill="#0000ff"/><polyline points="666.5,337.5 674.5,329.5" fill="none" stroke="#0000ff" stroke-width="1"/><polyline points="666.5,345.5 674.5,353.5" fill="none" stroke="#0000ff" stroke-width="1"/><polygon points="667,331.6 667,338 673.4,338" fill="#0000ff"/><rect x="538" y="341" width="23" height="1" fill="#0000ff"/><rect x="564" y="341" width="23" height="1" fill="#0000ff"/><rect x="560" y="333" width="1" height="17" fill="#0000ff"/><rect x="564" y="333" width="1" height="17" fill="#0000ff"/><rect x="506" y="365" width="1" height="13" fill="#0000ff"/><rect x="506" y="401" width="1" height="13" fill="#0000ff"/><rect x="506" y="413" width="1" height="13" fill="#0000ff"/><rect x="498" y="425" width="17" height="1" fill="#0000ff"/><rect x="502" y="431" width="9" height="1" fill="#0000ff"/><circle cx="506.5" cy="389.5" r="12" fill="none" stroke="#0000ff" stroke-width="1" shape-rendering="auto"/><rect x="497" y="373" width="5" height="1" fill="#0000ff"/><rect x="499" y="371" width="1" height="5" fill="#0000ff"/><rect x="497" y="406" width="5" height="1" fill="#0000ff"/><polyline points="618.5,381.5 618.5,393.5 614.5,395.5 622.5,399.5 614.5,403.5 622.5,407.5 614.5,411.5 622.5,415.5 618.5,417.5 618.5,429.5" fill="none" stroke="#0000ff" stroke-width="1"/><rect x="842" y="349" width="23" height="1" fill="#0000ff"/><rect x="868" y="349" width="23" height="1" fill="#0000ff"/><rect x="864" y="341" width="1" height="17" fill="#0000ff"/><rect x="868" y="341" width="1" height="17" fill="#0000ff"/><rect x="914" y="365" width="1" height="17" fill="#0000ff"/><rect x="904" y="381" width="11" height="1" fill="#0000ff"/><rect x="904" y="378" width="1" height="7" fill="#0000ff"/><rect x="904" y="387" width="1" height="6" fill="#0000ff"/><rect x="904" y="394" width="1" height="7" fill="#0000ff"/><rect x="900" y="381" width="1" height="17" fill="#0000ff"/><rect x="890" y="397" width="11" height="1" fill="#0000ff"/><rect x="904" y="389" width="11" height="1" fill="#0000ff"/><rect x="914" y="389" width="1" height="25" fill="#0000ff"/><rect x="904" y="397" width="11" height="1" fill="#0000ff"/><polygon points="907,389.5 911,386 911,393" fill="#0000ff"/><rect x="1050" y="429" width="1" height="13" fill="#0000ff"/><rect x="1050" y="465" width="1" height="13" fill="#0000ff"/><rect x="1039" y="441" width="3" height="25" fill="#0000ff"/><rect x="1026" y="453" width="14" height="1" fill="#0000ff"/><polyline points="1042.5,449.5 1050.5,441.5" fill="none" stroke="#0000ff" stroke-width="1"/><polyline points="1042.5,457.5 1050.5,465.5" fill="none" stroke="#0000ff" stroke-width="1"/><polygon points="1051,460.4 1051,466 1045.4,466" fill="#0000ff"/><polyline points="914.5,493.5 914.5,505.5 910.5,507.5 918.5,511.5 910.5,515.5 918.5,519.5 910.5,523.5 918.5,527.5 914.5,529.5 914.5,541.5" fill="none" stroke="#0000ff" stroke-width="1"/><rect x="674" y="453" width="1" height="13" fill="#0000ff"/><rect x="674" y="489" width="1" height="13" fill="#0000ff"/><rect x="683" y="465" width="3" height="25" fill="#0000ff"/><rect x="685" y="477" width="14" height="1" fill="#0000ff"/><polyline points="682.5,473.5 674.5,465.5" fill="none" stroke="#0000ff" stroke-width="1"/><polyline points="682.5,481.5 674.5,489.5" fill="none" stroke="#0000ff" stroke-width="1"/><polygon points="674,484.4 674,490 679.6,490" fill="#0000ff"/><rect x="674" y="489" width="1" height="13" fill="#0000ff"/><polyline points="674.5,501.5 674.5,513.5 670.5,515.5 678.5,519.5 670.5,523.5 678.5,527.5 670.5,531.5 678.5,535.5 674.5,537.5 674.5,549.5" fill="none" stroke="#0000ff" stroke-width="1"/><rect x="728" y="425" width="1" height="9" fill="#0000ff"/><rect x="734" y="421" width="1" height="17" fill="#0000ff"/><rect x="734" y="429" width="13" height="1" fill="#0000ff"/><polyline points="746.5,429.5 746.5,441.5 742.5,443.5 750.5,447.5 742.5,451.5 750.5,455.5 742.5,459.5 750.5,463.5 746.5,465.5 746.5,477.5" fill="none" stroke="#0000ff" stroke-width="1"/><rect x="746" y="493" width="1" height="49" fill="#0000ff"/><polygon points="738,513 755,513 746.5,522" fill="#0000ff"/><rect x="738" y="521" width="17" height="3" fill="#0000ff"/><rect x="802" y="485" width="1" height="23" fill="#0000ff"/><rect x="802" y="511" width="1" height="23" fill="#0000ff"/><rect x="794" y="507" width="17" height="1" fill="#0000ff"/><rect x="794" y="511" width="17" height="1" fill="#0000ff"/><rect x="1050" y="557" width="1" height="23" fill="#0000ff"/><rect x="1050" y="583" width="1" height="23" fill="#0000ff"/><rect x="1047" y="579" width="7" height="1" fill="#0000ff"/><rect x="1042" y="583" width="17" height="1" fill="#0000ff"/><rect x="1050" y="605" width="1" height="13" fill="#0000ff"/><rect x="1042" y="617" width="17" height="1" fill="#0000ff"/><rect x="1046" y="623" width="9" height="1" fill="#0000ff"/><rect x="1002" y="765" width="23" height="1" fill="#0000ff"/><rect x="1028" y="765" width="23" height="1" fill="#0000ff"/><rect x="1024" y="757" width="1" height="17" fill="#0000ff"/><rect x="1028" y="757" width="1" height="17" fill="#0000ff"/><rect x="930" y="661" width="25" height="1" fill="#0000ff"/><rect x="996" y="633" width="1" height="57" fill="#0000ff"/><polyline points="954.5,661.5 996.5,633.5" fill="none" stroke="#0000ff" stroke-width="1"/><polyline points="954.5,661.5 996.5,689.5" fill="none" stroke="#0000ff" stroke-width="1"/><rect x="996" y="637" width="7" height="1" fill="#0000ff"/><rect x="996" y="685" width="7" height="1" fill="#0000ff"/><rect x="1026" y="653" width="1" height="13" fill="#0000ff"/><rect x="1018" y="665" width="17" height="1" fill="#0000ff"/><rect x="1022" y="671" width="9" height="1" fill="#0000ff"/><rect x="970" y="629" width="1" height="22" fill="#0000ff"/><rect x="970" y="672" width="1" height="22" fill="#0000ff"/><rect x="975" y="633" width="5" height="1" fill="#0000ff"/><rect x="977" y="631" width="1" height="5" fill="#0000ff"/><rect x="988" y="649" width="5" height="1" fill="#0000ff"/><rect x="990" y="647" width="1" height="5" fill="#0000ff"/><rect x="988" y="673" width="5" height="1" fill="#0000ff"/><rect x="913" y="155" width="3" height="5" fill="#ff0000"/><rect x="912" y="156" width="5" height="3" fill="#ff0000"/><rect x="1049" y="155" width="3" height="5" fill="#ff0000"/><rect x="1048" y="156" width="5" height="3" fill="#ff0000"/><rect x="913" y="259" width="3" height="5" fill="#ff0000"/><rect x="912" y="260" width="5" height="3" fill="#ff0000"/><rect x="793" y="307" width="3" height="5" fill="#ff0000"/><rect x="792" y="308" width="5" height="3" fill="#ff0000"/><rect x="1049" y="307" width="3" height="5" fill="#ff0000"/><rect x="1048" y="308" width="5" height="3" fill="#ff0000"/><rect x="1129" y="307" width="3" height="5" fill="#ff0000"/><rect x="1128" y="308" width="5" height="3" fill="#ff0000"/><rect x="1201" y="307" width="3" height="5" fill="#ff0000"/><rect x="1200" y="308" width="5" height="3" fill="#ff0000"/><rect x="1201" y="275" width="3" height="5" fill="#ff0000"/><rect x="1200" y="276" width="5" height="3" fill="#ff0000"/><rect x="1297" y="347" width="3" height="5" fill="#ff0000"/><rect x="1296" y="348" width="5" height="3" fill="#ff0000"/><rect x="617" y="339" width="3" height="5" fill="#ff0000"/><rect x="616" y="340" width="5" height="3" fill="#ff0000"/><rect x="913" y="347" width="3" height="5" fill="#ff0000"/><rect x="912" y="348" width="5" height="3" fill="#ff0000"/><rect x="673" y="395" width="3" height="5" fill="#ff0000"/><rect x="672" y="396" width="5" height="3" fill="#ff0000"/><rect x="841" y="395" width="3" height="5" fill="#ff0000"/><rect x="840" y="396" width="5" height="3" fill="#ff0000"/><rect x="913" y="451" width="3" height="5" fill="#ff0000"/><rect x="912" y="452" width="5" height="3" fill="#ff0000"/><rect x="745" y="475" width="3" height="5" fill="#ff0000"/><rect x="744" y="476" width="5" height="3" fill="#ff0000"/><rect x="745" y="547" width="3" height="5" fill="#ff0000"/><rect x="744" y="548" width="5" height="3" fill="#ff0000"/><rect x="801" y="547" width="3" height="5" fill="#ff0000"/><rect x="800" y="548" width="5" height="3" fill="#ff0000"/><rect x="913" y="547" width="3" height="5" fill="#ff0000"/><rect x="912" y="548" width="5" height="3" fill="#ff0000"/><rect x="1049" y="547" width="3" height="5" fill="#ff0000"/><rect x="1048" y="548" width="5" height="3" fill="#ff0000"/><rect x="929" y="659" width="3" height="5" fill="#ff0000"/><rect x="928" y="660" width="5" height="3" fill="#ff0000"/><rect x="1097" y="683" width="3" height="5" fill="#ff0000"/><rect x="1096" y="684" width="5" height="3" fill="#ff0000"/><rect x="969" y="627" width="3" height="5" fill="#ff0000"/><rect x="968" y="628" width="5" height="3" fill="#ff0000"/><rect x="969" y="691" width="3" height="5" fill="#ff0000"/><rect x="968" y="692" width="5" height="3" fill="#ff0000"/></g><g font-family="Liberation Sans, sans-serif" stroke-width="0.18" paint-order="stroke"><text x="921" y="175" fill="#008000" font-size="12" text-anchor="start" font-weight="normal" stroke="#008000">R78</text><text x="922" y="190" fill="#008000" font-size="12" text-anchor="start" font-weight="normal" stroke="#008000">200</text><text x="873" y="199" fill="#008000" font-size="12" text-anchor="start" font-weight="normal" stroke="#008000">R77</text><text x="875" y="214" fill="#008000" font-size="12" text-anchor="start" font-weight="normal" stroke="#008000">470</text><text x="1055" y="262" fill="#008000" font-size="12" text-anchor="start" font-weight="normal" stroke="#008000">Q31</text><text x="1091" y="261" fill="#008000" font-size="12" text-anchor="start" font-weight="normal" stroke="#008000">C13</text><text x="1091" y="278" fill="#008000" font-size="12" text-anchor="start" font-weight="normal" stroke="#008000">1</text><text x="1226" y="197" fill="#008000" font-size="12" text-anchor="start" font-weight="normal" stroke="#008000">V1</text><text x="1202" y="274" fill="#800000" font-size="12" text-anchor="start" font-weight="normal" stroke="#800000">A</text><text x="1008" y="327" fill="#008000" font-size="12" text-anchor="start" font-weight="normal" stroke="#008000">R6</text><text x="1011" y="342" fill="#008000" font-size="12" text-anchor="start" font-weight="normal" stroke="#008000">300</text><text x="767" y="326" fill="#008000" font-size="12" text-anchor="start" font-weight="normal" stroke="#008000">R5</text><text x="764" y="342" fill="#008000" font-size="12" text-anchor="start" font-weight="normal" stroke="#008000">100</text><text x="679" y="342" fill="#008000" font-size="12" text-anchor="start" font-weight="normal" stroke="#008000">Q12</text><text x="679" y="357" fill="#008000" font-size="12" text-anchor="start" font-weight="normal" stroke="#008000">BC556B</text><text x="547" y="365" fill="#008000" font-size="12" text-anchor="start" font-weight="normal" stroke="#008000">C5</text><text x="564" y="380" fill="#008000" font-size="12" text-anchor="start" font-weight="normal" stroke="#008000">1</text><text x="521" y="397" fill="#008000" font-size="12" text-anchor="start" font-weight="normal" stroke="#008000">V5</text><text x="577" y="399" fill="#008000" font-size="12" text-anchor="start" font-weight="normal" stroke="#008000">R13</text><text x="581" y="414" fill="#008000" font-size="12" text-anchor="start" font-weight="normal" stroke="#008000">100k</text><text x="858" y="373" fill="#008000" font-size="12" text-anchor="start" font-weight="normal" stroke="#008000">C6</text><text x="883" y="373" fill="#008000" font-size="12" text-anchor="start" font-weight="normal" stroke="#008000">47p</text><text x="919" y="393" fill="#008000" font-size="12" text-anchor="start" font-weight="normal" stroke="#008000">X2</text><text x="919" y="408" fill="#008000" font-size="12" text-anchor="start" font-weight="normal" stroke="#008000">2N7000_ZX</text><text x="1089" y="375" fill="#008000" font-size="12" text-anchor="start" font-weight="normal" stroke="#008000">R9</text><text x="1086" y="390" fill="#008000" font-size="12" text-anchor="start" font-weight="normal" stroke="#008000">1meg</text><text x="1298" y="346" fill="#800000" font-size="12" text-anchor="start" font-weight="normal" stroke="#800000">OUT</text><text x="1264" y="383" fill="#008000" font-size="12" text-anchor="start" font-weight="normal" stroke="#008000">R11</text><text x="1273" y="398" fill="#008000" font-size="12" text-anchor="start" font-weight="normal" stroke="#008000">8</text><text x="1060" y="444" fill="#008000" font-size="12" text-anchor="start" font-weight="normal" stroke="#008000">NJW0281G</text><text x="1059" y="466" fill="#008000" font-size="12" text-anchor="start" font-weight="normal" stroke="#008000">Q32</text><text x="705" y="447" fill="#008000" font-size="12" text-anchor="start" font-weight="normal" stroke="#008000">R81</text><text x="715" y="462" fill="#008000" font-size="12" text-anchor="start" font-weight="normal" stroke="#008000">2k</text><text x="696" y="496" fill="#008000" font-size="12" text-anchor="start" font-weight="normal" stroke="#008000">Q30</text><text x="682" y="516" fill="#008000" font-size="12" text-anchor="start" font-weight="normal" stroke="#008000">BC546B</text><text x="633" y="519" fill="#008000" font-size="12" text-anchor="start" font-weight="normal" stroke="#008000">R80</text><text x="643" y="534" fill="#008000" font-size="12" text-anchor="start" font-weight="normal" stroke="#008000">100</text><text x="763" y="509" fill="#008000" font-size="12" text-anchor="start" font-weight="normal" stroke="#008000">C14</text><text x="772" y="524" fill="#008000" font-size="12" text-anchor="start" font-weight="normal" stroke="#008000">1u</text><text x="764" y="563" fill="#008000" font-size="12" text-anchor="start" font-weight="normal" stroke="#008000">D1</text><text x="873" y="511" fill="#008000" font-size="12" text-anchor="start" font-weight="normal" stroke="#008000">R79</text><text x="883" y="526" fill="#008000" font-size="12" text-anchor="start" font-weight="normal" stroke="#008000">200</text><text x="1026" y="582" fill="#008000" font-size="12" text-anchor="start" font-weight="normal" stroke="#008000">V3</text><text x="970" y="626" fill="#800000" font-size="12" text-anchor="start" font-weight="normal" stroke="#800000">VC</text><text x="970" y="690" fill="#800000" font-size="12" text-anchor="start" font-weight="normal" stroke="#800000">VE</text><text x="937" y="681" fill="#008000" font-size="12" text-anchor="start" font-weight="normal" stroke="#008000">X3</text><text x="1055" y="658" fill="#008000" font-size="12" text-anchor="start" font-weight="normal" stroke="#008000">LF411</text><text x="1011" y="789" fill="#008000" font-size="12" text-anchor="start" font-weight="normal" stroke="#008000">C12</text><text x="1020" y="804" fill="#008000" font-size="12" text-anchor="start" font-weight="normal" stroke="#008000">2u2</text></g>
<defs><pattern id="chk" width="2" height="2" patternUnits="userSpaceOnUse"><rect width="2" height="2" fill="#f0f0f0"/><rect width="1" height="1" fill="#fff"/><rect x="1" y="1" width="1" height="1" fill="#fff"/></pattern><pattern id="dtha0a0a0" width="2" height="2" patternUnits="userSpaceOnUse"><rect width="1" height="1" fill="#a0a0a0"/><rect x="1" y="1" width="1" height="1" fill="#a0a0a0"/></pattern><pattern id="dth000000" width="2" height="2" patternUnits="userSpaceOnUse"><rect width="1" height="1" fill="#000000"/><rect x="1" y="1" width="1" height="1" fill="#000000"/></pattern><pattern id="dthffffff" width="2" height="2" patternUnits="userSpaceOnUse"><rect width="1" height="1" fill="#ffffff"/><rect x="1" y="1" width="1" height="1" fill="#ffffff"/></pattern></defs><g shape-rendering="crispEdges"><polygon points="25,37 25,47.5 27.6,45.2 30,50 32.3,49 30,44.4 33.6,44.4" fill="#000000" shape-rendering="geometricPrecision"/><polyline points="44.5,43.5 51.5,36.5" fill="none" stroke="#000000" stroke-width="1"/><rect x="53" y="36" width="8" height="7" fill="#ffffff"/><rect x="53" y="36" width="8" height="1" fill="#000000"/><rect x="53" y="42" width="8" height="1" fill="#000000"/><rect x="53" y="36" width="1" height="7" fill="#000000"/><rect x="60" y="36" width="1" height="7" fill="#000000"/><path transform="translate(44.5,36.5)" d="M3.5,8 L7,11.5 L3.5,15 L0,11.5 Z" fill="#ffffff" stroke="#000000" stroke-width="1" shape-rendering="geometricPrecision"/><circle cx="57" cy="48" r="3.5" fill="#ffffff" stroke="#000000" stroke-width="1" shape-rendering="geometricPrecision"/><rect x="68" y="42" width="7" height="1" fill="#000000"/><rect x="69" y="43" width="5" height="1" fill="#000000"/><rect x="70" y="44" width="3" height="1" fill="#000000"/><rect x="71" y="45" width="1" height="1" fill="#000000"/><rect x="79" y="33" width="23" height="22" fill="url(#chk)"/><rect x="79" y="33" width="23" height="1" fill="#a0a0a0"/><rect x="79" y="33" width="1" height="22" fill="#a0a0a0"/><rect x="79" y="54" width="23" height="1" fill="#ffffff"/><rect x="101" y="33" width="1" height="22" fill="#ffffff"/><rect x="83" y="39" width="1" height="1" fill="#000000"/><rect x="85" y="39" width="1" height="1" fill="#000000"/><rect x="87" y="39" width="1" height="1" fill="#000000"/><rect x="89" y="39" width="1" height="1" fill="#000000"/><rect x="91" y="39" width="1" height="1" fill="#000000"/><rect x="93" y="39" width="1" height="1" fill="#000000"/><rect x="95" y="39" width="1" height="1" fill="#000000"/><rect x="83" y="47" width="1" height="1" fill="#000000"/><rect x="85" y="47" width="1" height="1" fill="#000000"/><rect x="87" y="47" width="1" height="1" fill="#000000"/><rect x="89" y="47" width="1" height="1" fill="#000000"/><rect x="91" y="47" width="1" height="1" fill="#000000"/><rect x="93" y="47" width="1" height="1" fill="#000000"/><rect x="95" y="47" width="1" height="1" fill="#000000"/><rect x="83" y="39" width="1" height="1" fill="#000000"/><rect x="83" y="41" width="1" height="1" fill="#000000"/><rect x="83" y="43" width="1" height="1" fill="#000000"/><rect x="83" y="45" width="1" height="1" fill="#000000"/><rect x="83" y="47" width="1" height="1" fill="#000000"/><rect x="95" y="39" width="1" height="1" fill="#000000"/><rect x="95" y="41" width="1" height="1" fill="#000000"/><rect x="95" y="43" width="1" height="1" fill="#000000"/><rect x="95" y="45" width="1" height="1" fill="#000000"/><rect x="95" y="47" width="1" height="1" fill="#000000"/><path transform="translate(83.5,37.5)" d="M0,12 C3,12 4,15 6,13 C9,10 8,4 12,4 C14,4 15,6 15,7" fill="none" stroke="#000080" stroke-width="1.3" shape-rendering="geometricPrecision"/><path transform="translate(105.5,36.5)" d="M0,5 C1,-1 5,-1 6,4 C7,8 10,8 11,4 C12,0 13,0 15,6" fill="none" stroke="#000080" stroke-width="1.3" shape-rendering="geometricPrecision"/><rect x="108" y="39" width="1" height="1" fill="#000000"/><rect x="108" y="41" width="1" height="1" fill="#000000"/><rect x="108" y="43" width="1" height="1" fill="#000000"/><rect x="117" y="37" width="1" height="1" fill="#000000"/><rect x="117" y="39" width="1" height="1" fill="#000000"/><rect x="117" y="41" width="1" height="1" fill="#000000"/><rect x="117" y="43" width="1" height="1" fill="#000000"/><rect x="105" y="46" width="16" height="1" fill="#000000"/><rect x="107" y="48" width="5" height="1" fill="#000000"/><rect x="114" y="48" width="5" height="1" fill="#000000"/><rect x="107" y="50" width="5" height="1" fill="#000000"/><rect x="114" y="50" width="5" height="1" fill="#000000"/><polyline points="128.5,37.5 130.5,37.5 131.5,40.5 141.5,40.5 142.5,37.5 144.5,37.5" fill="none" stroke="#000080" stroke-width="1.4" shape-rendering="geometricPrecision"/><rect x="130" y="41" width="1" height="1" fill="#000000"/><rect x="130" y="43" width="1" height="1" fill="#000000"/><rect x="130" y="45" width="1" height="1" fill="#000000"/><rect x="130" y="47" width="1" height="1" fill="#000000"/><rect x="142" y="41" width="1" height="1" fill="#000000"/><rect x="142" y="43" width="1" height="1" fill="#000000"/><rect x="142" y="45" width="1" height="1" fill="#000000"/><rect x="142" y="47" width="1" height="1" fill="#000000"/><rect x="130" y="48" width="13" height="1" fill="#000000"/><rect x="131" y="47" width="1" height="3" fill="#000000"/><rect x="141" y="47" width="1" height="3" fill="#000000"/><rect x="135" y="46" width="3" height="1" fill="#000000"/><rect x="135" y="50" width="3" height="1" fill="#000000"/><rect x="135" y="46" width="1" height="5" fill="#000000"/><rect x="137" y="46" width="1" height="5" fill="#000000"/><rect x="133" y="46" width="1" height="5" fill="#000000"/><rect x="154" y="36" width="1" height="1" fill="#000000"/><rect x="156" y="36" width="1" height="1" fill="#000000"/><rect x="158" y="36" width="1" height="1" fill="#000000"/><rect x="160" y="36" width="1" height="1" fill="#000000"/><rect x="162" y="36" width="1" height="1" fill="#000000"/><rect x="153" y="37" width="1" height="1" fill="#000000"/><rect x="153" y="39" width="1" height="1" fill="#000000"/><rect x="153" y="41" width="1" height="1" fill="#000000"/><rect x="153" y="43" width="1" height="1" fill="#000000"/><rect x="153" y="45" width="1" height="1" fill="#000000"/><rect x="153" y="47" width="1" height="1" fill="#000000"/><rect x="153" y="49" width="1" height="1" fill="#000000"/><rect x="154" y="50" width="1" height="1" fill="#000000"/><rect x="156" y="50" width="1" height="1" fill="#000000"/><rect x="158" y="50" width="1" height="1" fill="#000000"/><polygon points="151.5,39 155.5,39 153.5,36.5" fill="#000000"/><polygon points="151.5,48 155.5,48 153.5,50.5" fill="#000000"/><rect x="151" y="41" width="1" height="5" fill="#000000"/><rect x="153" y="41" width="4" height="5" fill="#f0f0f0"/><rect x="153" y="41" width="4" height="1" fill="#000000"/><rect x="153" y="45" width="4" height="1" fill="#000000"/><rect x="153" y="41" width="1" height="5" fill="#000000"/><rect x="156" y="41" width="1" height="5" fill="#000000"/><path transform="translate(151.5,36.5)" d="M8,14 C10,12 11,2 13,0.5 C14,0 15,1 15,3" fill="none" stroke="#000080" stroke-width="1.3" shape-rendering="geometricPrecision"/><polyline points="174.5,47.5 178.5,47.5 178.5,50.5 184.5,50.5 184.5,47.5 190.5,47.5" fill="none" stroke="#000080" stroke-width="1.4" shape-rendering="geometricPrecision"/><rect x="183" y="36" width="1" height="4" fill="#000000"/><rect x="186" y="39" width="1" height="1" fill="#000000"/><rect x="188" y="36" width="3" height="1" fill="#000000"/><rect x="188" y="39" width="3" height="1" fill="#000000"/><rect x="188" y="36" width="1" height="4" fill="#000000"/><rect x="190" y="36" width="1" height="4" fill="#000000"/><rect x="184" y="41" width="7" height="1" fill="#000000"/><polyline points="184.5,41.5 180.5,45.5" fill="none" stroke="#000000" stroke-width="1"/><polygon points="179,46.5 179,43 182.5,46.5" fill="#000000"/><text x="200" y="41" font-family="Liberation Sans" font-size="7" font-weight="bold" fill="#990000" text-anchor="start" >F()</text><rect x="198" y="39" width="1" height="6" fill="#000000"/><polygon points="196.5,44 200.5,44 198.5,47" fill="#000000"/><rect x="211" y="39" width="1" height="6" fill="#000000"/><polygon points="209.5,44 213.5,44 211.5,47" fill="#000000"/><rect x="198" y="47" width="1" height="1" fill="#000000"/><rect x="198" y="49" width="1" height="1" fill="#000000"/><rect x="211" y="47" width="1" height="1" fill="#000000"/><rect x="211" y="49" width="1" height="1" fill="#000000"/><path transform="translate(197.5,36.5)" d="M1,14 C4,13 5,9 8,9 C11,9 12,13 14,14" fill="none" stroke="#000080" stroke-width="1.3" shape-rendering="geometricPrecision"/><text x="228" y="50" font-family="Liberation Serif" font-size="20" font-weight="bold" fill="#000000" text-anchor="middle" >T</text><rect x="242" y="35" width="1" height="17" fill="#a0a0a0"/><rect x="243" y="35" width="1" height="17" fill="#ffffff"/><rect x="248" y="40" width="12" height="11" fill="#ffffff"/><rect x="248" y="40" width="12" height="1" fill="#000000"/><rect x="248" y="50" width="12" height="1" fill="#000000"/><rect x="248" y="40" width="1" height="11" fill="#000000"/><rect x="259" y="40" width="1" height="11" fill="#000000"/><rect x="250" y="46" width="2" height="1" fill="#000000"/><rect x="253" y="46" width="5" height="1" fill="#000000"/><rect x="250" y="48" width="2" height="1" fill="#000000"/><rect x="253" y="48" width="5" height="1" fill="#000000"/><rect x="250" y="42" width="1" height="2" fill="#000000"/><rect x="251" y="43" width="1" height="1" fill="#000000"/><path transform="translate(248.5,36.5)" d="M3,6.5 L7.5,1 L12.5,1 L13.5,4.5 L11,7 L8.5,6 L6.5,8.5 Z" fill="#ffffff" stroke="#000000" stroke-width="1" shape-rendering="geometricPrecision"/><polygon points="252,42 256,38 259,41 255,45" fill="url(#dth000000)"/><rect x="262" y="37" width="2" height="5" fill="#000080"/><rect x="263" y="42" width="1" height="2" fill="#000080"/><rect x="270" y="35" width="1" height="17" fill="#a0a0a0"/><rect x="271" y="35" width="1" height="17" fill="#ffffff"/><polygon points="278,38 278,49.5 290,43.7" fill="#000000" shape-rendering="geometricPrecision"/><rect x="302" y="39" width="11" height="11" fill="#ffffff"/><rect x="301" y="38" width="11" height="11" fill="#a0a0a0"/><rect x="326" y="39" width="4" height="11" fill="#ffffff"/><rect x="333" y="39" width="4" height="11" fill="#ffffff"/><rect x="325" y="38" width="4" height="11" fill="#a0a0a0"/><rect x="332" y="38" width="4" height="11" fill="#a0a0a0"/><rect x="344" y="35" width="1" height="17" fill="#a0a0a0"/><rect x="345" y="35" width="1" height="17" fill="#ffffff"/><polyline points="350.5,50.5 362.5,38.5 365.5,38.5" fill="none" stroke="#000000" stroke-width="1"/><rect x="353" y="46" width="2" height="2" fill="#000000"/><rect x="358" y="41" width="2" height="2" fill="#000000"/><polyline points="374.5,49.5 386.5,37.5" fill="none" stroke="#000000" stroke-width="1"/><rect x="373" y="48" width="3" height="3" fill="#ffffff"/><rect x="373" y="48" width="3" height="1" fill="#000000"/><rect x="373" y="50" width="3" height="1" fill="#000000"/><rect x="373" y="48" width="1" height="3" fill="#000000"/><rect x="375" y="48" width="1" height="3" fill="#000000"/><rect x="379" y="42" width="3" height="3" fill="#ffffff"/><rect x="379" y="42" width="3" height="1" fill="#000000"/><rect x="379" y="44" width="3" height="1" fill="#000000"/><rect x="379" y="42" width="1" height="3" fill="#000000"/><rect x="381" y="42" width="1" height="3" fill="#000000"/><rect x="385" y="36" width="3" height="3" fill="#ffffff"/><rect x="385" y="36" width="3" height="1" fill="#000000"/><rect x="385" y="38" width="3" height="1" fill="#000000"/><rect x="385" y="36" width="1" height="3" fill="#000000"/><rect x="387" y="36" width="1" height="3" fill="#000000"/><rect x="395" y="35" width="1" height="17" fill="#a0a0a0"/><rect x="396" y="35" width="1" height="17" fill="#ffffff"/><rect x="21" y="62" width="16" height="1" fill="#000000"/><rect x="21" y="76" width="16" height="1" fill="#000000"/><rect x="21" y="62" width="1" height="15" fill="#000000"/><rect x="36" y="62" width="1" height="15" fill="#000000"/><rect x="24" y="63" width="1" height="2" fill="#000000"/><rect x="24" y="74" width="1" height="2" fill="#000000"/><rect x="26" y="63" width="1" height="2" fill="#000000"/><rect x="26" y="74" width="1" height="2" fill="#000000"/><rect x="28" y="63" width="1" height="2" fill="#000000"/><rect x="28" y="74" width="1" height="2" fill="#000000"/><rect x="30" y="63" width="1" height="2" fill="#000000"/><rect x="30" y="74" width="1" height="2" fill="#000000"/><rect x="32" y="63" width="1" height="2" fill="#000000"/><rect x="32" y="74" width="1" height="2" fill="#000000"/><rect x="34" y="63" width="1" height="2" fill="#000000"/><rect x="34" y="74" width="1" height="2" fill="#000000"/><rect x="22" y="65" width="3" height="1" fill="#000000"/><rect x="33" y="65" width="3" height="1" fill="#000000"/><rect x="22" y="67" width="3" height="1" fill="#000000"/><rect x="33" y="67" width="3" height="1" fill="#000000"/><rect x="22" y="69" width="3" height="1" fill="#000000"/><rect x="33" y="69" width="3" height="1" fill="#000000"/><rect x="22" y="71" width="3" height="1" fill="#000000"/><rect x="33" y="71" width="3" height="1" fill="#000000"/><rect x="22" y="73" width="3" height="1" fill="#000000"/><rect x="33" y="73" width="3" height="1" fill="#000000"/><rect x="21" y="62" width="2" height="2" fill="#000000"/><rect x="35" y="62" width="2" height="2" fill="#000000"/><rect x="21" y="75" width="2" height="2" fill="#000000"/><rect x="35" y="75" width="2" height="2" fill="#000000"/><rect x="45" y="63" width="14" height="13" fill="url(#chk)"/><rect x="44" y="62" width="16" height="1" fill="#000000"/><rect x="44" y="76" width="16" height="1" fill="#000000"/><rect x="44" y="62" width="1" height="15" fill="#000000"/><rect x="59" y="62" width="1" height="15" fill="#000000"/><rect x="49" y="63" width="1" height="2" fill="#000000"/><rect x="49" y="74" width="1" height="2" fill="#000000"/><rect x="48" y="67" width="3" height="1" fill="#000000"/><rect x="49" y="66" width="1" height="3" fill="#000000"/><rect x="48" y="71" width="3" height="1" fill="#000000"/><rect x="49" y="70" width="1" height="3" fill="#000000"/><rect x="54" y="63" width="1" height="2" fill="#000000"/><rect x="54" y="74" width="1" height="2" fill="#000000"/><rect x="53" y="67" width="3" height="1" fill="#000000"/><rect x="54" y="66" width="1" height="3" fill="#000000"/><rect x="53" y="71" width="3" height="1" fill="#000000"/><rect x="54" y="70" width="1" height="3" fill="#000000"/><rect x="45" y="67" width="2" height="1" fill="#000000"/><rect x="57" y="67" width="2" height="1" fill="#000000"/><rect x="45" y="71" width="2" height="1" fill="#000000"/><rect x="57" y="71" width="2" height="1" fill="#000000"/><rect x="66" y="61" width="1" height="17" fill="#a0a0a0"/><rect x="67" y="61" width="1" height="17" fill="#ffffff"/><rect x="69" y="59" width="23" height="22" fill="url(#chk)"/><rect x="69" y="59" width="23" height="1" fill="#a0a0a0"/><rect x="69" y="59" width="1" height="22" fill="#a0a0a0"/><rect x="69" y="80" width="23" height="1" fill="#ffffff"/><rect x="91" y="59" width="1" height="22" fill="#ffffff"/><rect x="73" y="63" width="15" height="15" fill="#000000"/><rect x="74" y="64" width="1" height="13" fill="#ffffff"/><rect x="76" y="64" width="1" height="13" fill="#ffffff"/><rect x="78" y="64" width="1" height="13" fill="#ffffff"/><rect x="80" y="64" width="1" height="13" fill="#ffffff"/><rect x="82" y="64" width="1" height="13" fill="#ffffff"/><rect x="84" y="64" width="1" height="13" fill="#ffffff"/><rect x="86" y="64" width="1" height="13" fill="#ffffff"/><rect x="92" y="59" width="23" height="22" fill="url(#chk)"/><rect x="92" y="59" width="23" height="1" fill="#a0a0a0"/><rect x="92" y="59" width="1" height="22" fill="#a0a0a0"/><rect x="92" y="80" width="23" height="1" fill="#ffffff"/><rect x="114" y="59" width="1" height="22" fill="#ffffff"/><rect x="96" y="63" width="16" height="15" fill="#000000"/><rect x="97" y="64" width="14" height="1" fill="#ffffff"/><rect x="97" y="66" width="14" height="1" fill="#ffffff"/><rect x="97" y="68" width="14" height="1" fill="#ffffff"/><rect x="97" y="70" width="14" height="1" fill="#ffffff"/><rect x="97" y="72" width="14" height="1" fill="#ffffff"/><rect x="97" y="74" width="14" height="1" fill="#ffffff"/><rect x="97" y="76" width="14" height="1" fill="#ffffff"/><rect x="115" y="59" width="23" height="22" fill="url(#chk)"/><rect x="115" y="59" width="23" height="1" fill="#a0a0a0"/><rect x="115" y="59" width="1" height="22" fill="#a0a0a0"/><rect x="115" y="80" width="23" height="1" fill="#ffffff"/><rect x="137" y="59" width="1" height="22" fill="#ffffff"/><rect x="119" y="63" width="16" height="15" fill="#ffffff"/><rect x="119" y="63" width="16" height="1" fill="#000000"/><rect x="119" y="77" width="16" height="1" fill="#000000"/><rect x="119" y="63" width="1" height="15" fill="#000000"/><rect x="134" y="63" width="1" height="15" fill="#000000"/><rect x="120" y="64" width="5" height="13" fill="url(#chk)"/><rect x="125" y="64" width="1" height="1" fill="#000000"/><rect x="125" y="76" width="1" height="1" fill="#000000"/><rect x="125" y="66" width="1" height="1" fill="#000000"/><rect x="125" y="68" width="1" height="1" fill="#000000"/><rect x="125" y="70" width="1" height="1" fill="#000000"/><rect x="125" y="72" width="1" height="1" fill="#000000"/><rect x="125" y="74" width="1" height="1" fill="#000000"/><rect x="128" y="64" width="1" height="1" fill="#000000"/><rect x="128" y="76" width="1" height="1" fill="#000000"/><rect x="128" y="66" width="1" height="1" fill="#000000"/><rect x="128" y="68" width="1" height="1" fill="#000000"/><rect x="128" y="70" width="1" height="1" fill="#000000"/><rect x="128" y="72" width="1" height="1" fill="#000000"/><rect x="128" y="74" width="1" height="1" fill="#000000"/><rect x="130" y="64" width="1" height="1" fill="#000000"/><rect x="130" y="76" width="1" height="1" fill="#000000"/><rect x="130" y="66" width="1" height="1" fill="#000000"/><rect x="130" y="68" width="1" height="1" fill="#000000"/><rect x="130" y="70" width="1" height="1" fill="#000000"/><rect x="130" y="72" width="1" height="1" fill="#000000"/><rect x="130" y="74" width="1" height="1" fill="#000000"/><rect x="132" y="64" width="1" height="1" fill="#000000"/><rect x="132" y="76" width="1" height="1" fill="#000000"/><rect x="132" y="66" width="1" height="1" fill="#000000"/><rect x="132" y="68" width="1" height="1" fill="#000000"/><rect x="132" y="70" width="1" height="1" fill="#000000"/><rect x="132" y="72" width="1" height="1" fill="#000000"/><rect x="132" y="74" width="1" height="1" fill="#000000"/><rect x="141" y="62" width="16" height="1" fill="#000000"/><rect x="141" y="76" width="16" height="1" fill="#000000"/><rect x="141" y="62" width="1" height="15" fill="#000000"/><rect x="156" y="62" width="1" height="15" fill="#000000"/><rect x="147" y="63" width="1" height="1" fill="#000000"/><rect x="147" y="75" width="1" height="1" fill="#000000"/><rect x="147" y="65" width="1" height="1" fill="#000000"/><rect x="147" y="67" width="1" height="1" fill="#000000"/><rect x="147" y="69" width="1" height="1" fill="#000000"/><rect x="147" y="71" width="1" height="1" fill="#000000"/><rect x="147" y="73" width="1" height="1" fill="#000000"/><rect x="152" y="63" width="1" height="1" fill="#000000"/><rect x="152" y="75" width="1" height="1" fill="#000000"/><rect x="152" y="65" width="1" height="1" fill="#000000"/><rect x="152" y="67" width="1" height="1" fill="#000000"/><rect x="152" y="69" width="1" height="1" fill="#000000"/><rect x="152" y="71" width="1" height="1" fill="#000000"/><rect x="152" y="73" width="1" height="1" fill="#000000"/><rect x="163" y="61" width="1" height="17" fill="#a0a0a0"/><rect x="164" y="61" width="1" height="17" fill="#ffffff"/><rect x="169" y="62" width="16" height="1" fill="#000000"/><rect x="169" y="76" width="16" height="1" fill="#000000"/><rect x="169" y="62" width="1" height="15" fill="#000000"/><rect x="184" y="62" width="1" height="15" fill="#000000"/><rect x="169" y="72" width="16" height="1" fill="#000000"/><rect x="196" y="62" width="1" height="1" fill="#000000"/><rect x="196" y="65" width="1" height="1" fill="#000000"/><rect x="196" y="66" width="1" height="1" fill="#000000"/><rect x="196" y="69" width="1" height="1" fill="#000000"/><rect x="196" y="70" width="1" height="1" fill="#000000"/><rect x="196" y="74" width="1" height="1" fill="#000000"/><rect x="196" y="75" width="1" height="1" fill="#000000"/><rect x="192" y="70" width="1" height="1" fill="#000000"/><rect x="193" y="70" width="1" height="1" fill="#000000"/><rect x="199" y="70" width="1" height="1" fill="#000000"/><rect x="200" y="70" width="1" height="1" fill="#000000"/><rect x="203" y="70" width="1" height="1" fill="#000000"/><rect x="204" y="70" width="1" height="1" fill="#000000"/><rect x="205" y="70" width="1" height="1" fill="#000000"/><path transform="translate(192.5,62.5)" d="M0,10 C3,10 6,6 9,5 C12,4 14,2 16,2" fill="none" stroke="#0000ff" stroke-width="1.05" shape-rendering="geometricPrecision"/><rect x="214" y="61" width="1" height="17" fill="#a0a0a0"/><rect x="215" y="61" width="1" height="17" fill="#ffffff"/><rect x="227" y="62" width="1" height="1" fill="#000000"/><rect x="227" y="64" width="1" height="1" fill="#000000"/><rect x="227" y="66" width="1" height="1" fill="#000000"/><rect x="227" y="68" width="1" height="1" fill="#000000"/><rect x="227" y="70" width="1" height="1" fill="#000000"/><rect x="227" y="72" width="1" height="1" fill="#000000"/><rect x="227" y="74" width="1" height="1" fill="#000000"/><rect x="227" y="76" width="1" height="1" fill="#000000"/><rect x="220" y="68" width="6" height="1" fill="#000000"/><polygon points="224,65.5 224,71.5 227.5,68.5" fill="#000000"/><path transform="translate(220.5,62.5)" d="M1,14 C5,13 6,9 8,6 C10,3 11,0 14,0" fill="none" stroke="#0000ff" stroke-width="1.05" shape-rendering="geometricPrecision"/><rect x="251" y="62" width="1" height="1" fill="#000000"/><rect x="251" y="64" width="1" height="1" fill="#000000"/><rect x="251" y="66" width="1" height="1" fill="#000000"/><rect x="251" y="68" width="1" height="1" fill="#000000"/><rect x="251" y="70" width="1" height="1" fill="#000000"/><rect x="251" y="72" width="1" height="1" fill="#000000"/><rect x="251" y="74" width="1" height="1" fill="#000000"/><rect x="251" y="76" width="1" height="1" fill="#000000"/><rect x="251" y="64" width="1" height="7" fill="#000000"/><polygon points="248.5,69 254.5,69 251.5,73" fill="#000000"/><path transform="translate(243.5,62.5)" d="M0,13 C5,13 7,11 9,10 C12,8 14,7 16,6" fill="none" stroke="#0000ff" stroke-width="1.05" shape-rendering="geometricPrecision"/><rect x="274" y="62" width="1" height="1" fill="#000000"/><rect x="274" y="64" width="1" height="1" fill="#000000"/><rect x="274" y="66" width="1" height="1" fill="#000000"/><rect x="274" y="68" width="1" height="1" fill="#000000"/><rect x="274" y="70" width="1" height="1" fill="#000000"/><rect x="274" y="72" width="1" height="1" fill="#000000"/><rect x="274" y="74" width="1" height="1" fill="#000000"/><rect x="274" y="76" width="1" height="1" fill="#000000"/><rect x="278" y="62" width="1" height="1" fill="#000000"/><rect x="278" y="64" width="1" height="1" fill="#000000"/><rect x="278" y="66" width="1" height="1" fill="#000000"/><rect x="278" y="68" width="1" height="1" fill="#000000"/><rect x="278" y="70" width="1" height="1" fill="#000000"/><rect x="278" y="72" width="1" height="1" fill="#000000"/><rect x="278" y="74" width="1" height="1" fill="#000000"/><rect x="278" y="76" width="1" height="1" fill="#000000"/><rect x="274" y="65" width="1" height="6" fill="#000000"/><polygon points="271.5,69 277.5,69 274.5,73" fill="#000000"/><rect x="278" y="63" width="1" height="4" fill="#000000"/><polygon points="275.5,66 281.5,66 278.5,70" fill="#000000"/><path transform="translate(266.5,62.5)" d="M0,13 C5,13 7,11 9,10 C12,8 14,7 16,5" fill="none" stroke="#0000ff" stroke-width="1.05" shape-rendering="geometricPrecision"/><path transform="translate(289.5,64.5)" d="M0,1 C5,1 6,3 8,5 C10,7 12,7 16,7" fill="none" stroke="#a0a0a0" stroke-width="1" shape-rendering="geometricPrecision"/><path transform="translate(289.5,64.5)" d="M0,4 C5,4 6,6 8,8 C10,10 12,10 16,10" fill="none" stroke="#a0a0a0" stroke-width="1" shape-rendering="geometricPrecision"/><path transform="translate(289.5,64.5)" d="M0,7 C5,7 6,9 8,11 C10,13 12,13 16,13" fill="none" stroke="#a0a0a0" stroke-width="1" shape-rendering="geometricPrecision"/><rect x="311" y="61" width="1" height="17" fill="#a0a0a0"/><rect x="312" y="61" width="1" height="17" fill="#ffffff"/><rect x="317" y="63" width="16" height="13" fill="#ffffff"/><rect x="317" y="63" width="16" height="1" fill="#000080"/><rect x="317" y="75" width="16" height="1" fill="#000080"/><rect x="317" y="63" width="1" height="13" fill="#000080"/><rect x="332" y="63" width="1" height="13" fill="#000080"/><path transform="translate(317.5,62.5)" d="M1,6 L3,4 L5,6 L7,3 L9,6" fill="none" stroke="#0000ff" stroke-width="1" shape-rendering="geometricPrecision"/><path transform="translate(317.5,62.5)" d="M1,10 C3,12 5,12 7,10 C9,12 12,12 14,8" fill="none" stroke="#ff0000" stroke-width="1" shape-rendering="geometricPrecision"/><path transform="translate(317.5,62.5)" d="M4,10 L11,3 L14,3 L14,5 L8,11 Z" fill="#ffffff" stroke="#000000" stroke-width="1.2" shape-rendering="geometricPrecision"/><rect x="339" y="61" width="1" height="17" fill="#a0a0a0"/><rect x="340" y="61" width="1" height="17" fill="#ffffff"/><rect x="18" y="85" width="23" height="22" fill="url(#chk)"/><rect x="18" y="85" width="23" height="1" fill="#a0a0a0"/><rect x="18" y="85" width="1" height="22" fill="#a0a0a0"/><rect x="18" y="106" width="23" height="1" fill="#ffffff"/><rect x="40" y="85" width="1" height="22" fill="#ffffff"/><rect x="29" y="89" width="1" height="1" fill="#000000"/><rect x="29" y="91" width="1" height="1" fill="#000000"/><rect x="29" y="93" width="1" height="1" fill="#000000"/><rect x="29" y="95" width="1" height="1" fill="#000000"/><rect x="29" y="97" width="1" height="1" fill="#000000"/><rect x="29" y="99" width="1" height="1" fill="#000000"/><rect x="29" y="101" width="1" height="1" fill="#000000"/><rect x="29" y="103" width="1" height="1" fill="#000000"/><rect x="22" y="96" width="16" height="1" fill="#0000ff"/><rect x="23" y="95" width="3" height="3" fill="#0000ff"/><rect x="22" y="96" width="5" height="1" fill="#0000ff"/><rect x="28" y="95" width="3" height="3" fill="#0000ff"/><rect x="27" y="96" width="5" height="1" fill="#0000ff"/><rect x="33" y="95" width="3" height="3" fill="#0000ff"/><rect x="32" y="96" width="5" height="1" fill="#0000ff"/><rect x="51" y="89" width="1" height="1" fill="#000000"/><rect x="51" y="91" width="1" height="1" fill="#000000"/><rect x="51" y="93" width="1" height="1" fill="#000000"/><rect x="51" y="95" width="1" height="1" fill="#000000"/><rect x="51" y="97" width="1" height="1" fill="#000000"/><rect x="51" y="99" width="1" height="1" fill="#000000"/><rect x="51" y="101" width="1" height="1" fill="#000000"/><rect x="44" y="95" width="16" height="1" fill="#0000ff"/><rect x="46" y="94" width="3" height="3" fill="#0000ff"/><rect x="45" y="95" width="5" height="1" fill="#0000ff"/><rect x="56" y="94" width="3" height="3" fill="#0000ff"/><rect x="55" y="95" width="5" height="1" fill="#0000ff"/><rect x="75" y="89" width="1" height="1" fill="#000000"/><rect x="75" y="91" width="1" height="1" fill="#000000"/><rect x="75" y="93" width="1" height="1" fill="#000000"/><rect x="75" y="95" width="1" height="1" fill="#000000"/><rect x="75" y="97" width="1" height="1" fill="#000000"/><rect x="75" y="99" width="1" height="1" fill="#000000"/><rect x="75" y="101" width="1" height="1" fill="#000000"/><rect x="75" y="103" width="1" height="1" fill="#000000"/><path transform="translate(67.5,88.5)" d="M0,14 C4,12 5,0 8,0 C11,0 12,12 16,13" fill="none" stroke="#0000ff" stroke-width="1.1" shape-rendering="geometricPrecision"/><rect x="98" y="89" width="1" height="1" fill="#000000"/><rect x="98" y="91" width="1" height="1" fill="#000000"/><rect x="98" y="93" width="1" height="1" fill="#000000"/><rect x="98" y="95" width="1" height="1" fill="#000000"/><rect x="98" y="97" width="1" height="1" fill="#000000"/><rect x="98" y="99" width="1" height="1" fill="#000000"/><rect x="98" y="101" width="1" height="1" fill="#000000"/><rect x="98" y="103" width="1" height="1" fill="#000000"/><path transform="translate(90.5,88.5)" d="M0,0 C3,3 5,15 8,15 C11,15 13,4 16,1" fill="none" stroke="#0000ff" stroke-width="1.1" shape-rendering="geometricPrecision"/><rect x="124" y="89" width="1" height="1" fill="#000000"/><rect x="124" y="91" width="1" height="1" fill="#000000"/><rect x="124" y="93" width="1" height="1" fill="#000000"/><rect x="124" y="95" width="1" height="1" fill="#000000"/><rect x="124" y="97" width="1" height="1" fill="#000000"/><rect x="124" y="99" width="1" height="1" fill="#000000"/><rect x="124" y="101" width="1" height="1" fill="#000000"/><rect x="124" y="103" width="1" height="1" fill="#000000"/><path transform="translate(113.5,88.5)" d="M0,10 C1,9 2,9 3,11 C4,14 6,14 7,11 C9,4 10,3 11,3 C13,4 14,9 16,12" fill="none" stroke="#0000ff" stroke-width="1.1" shape-rendering="geometricPrecision"/><rect x="147" y="89" width="1" height="1" fill="#000000"/><rect x="147" y="91" width="1" height="1" fill="#000000"/><rect x="147" y="93" width="1" height="1" fill="#000000"/><rect x="147" y="95" width="1" height="1" fill="#000000"/><rect x="147" y="97" width="1" height="1" fill="#000000"/><rect x="147" y="99" width="1" height="1" fill="#000000"/><rect x="147" y="101" width="1" height="1" fill="#000000"/><rect x="147" y="103" width="1" height="1" fill="#000000"/><path transform="translate(136.5,88.5)" d="M0,5 C1,6 2,6 3,4 C4,1 6,1 7,4 C9,10 10,12 11,12 C13,11 14,6 16,3" fill="none" stroke="#0000ff" stroke-width="1.1" shape-rendering="geometricPrecision"/><rect x="166" y="89" width="1" height="1" fill="#000000"/><rect x="166" y="91" width="1" height="1" fill="#000000"/><rect x="166" y="93" width="1" height="1" fill="#000000"/><rect x="166" y="95" width="1" height="1" fill="#000000"/><rect x="166" y="97" width="1" height="1" fill="#000000"/><rect x="166" y="99" width="1" height="1" fill="#000000"/><rect x="166" y="101" width="1" height="1" fill="#000000"/><rect x="166" y="103" width="1" height="1" fill="#000000"/><path transform="translate(159.5,88.5)" d="M0,15 L16,0" fill="none" stroke="#0000ff" stroke-width="1.1" shape-rendering="geometricPrecision"/><rect x="189" y="89" width="1" height="1" fill="#000000"/><rect x="189" y="91" width="1" height="1" fill="#000000"/><rect x="189" y="93" width="1" height="1" fill="#000000"/><rect x="189" y="95" width="1" height="1" fill="#000000"/><rect x="189" y="97" width="1" height="1" fill="#000000"/><rect x="189" y="99" width="1" height="1" fill="#000000"/><rect x="189" y="101" width="1" height="1" fill="#000000"/><rect x="189" y="103" width="1" height="1" fill="#000000"/><path transform="translate(182.5,88.5)" d="M0,12 C3,4 5,1 7,1 C10,1 12,8 14,14" fill="none" stroke="#0000ff" stroke-width="1.1" shape-rendering="geometricPrecision"/><path transform="translate(182.5,88.5)" d="M4,14 C6,6 8,3 10,3 C13,3 15,6 16,9" fill="none" stroke="#0000ff" stroke-width="1.1" shape-rendering="geometricPrecision"/><rect x="212" y="89" width="1" height="1" fill="#000000"/><rect x="212" y="91" width="1" height="1" fill="#000000"/><rect x="212" y="93" width="1" height="1" fill="#000000"/><rect x="212" y="95" width="1" height="1" fill="#000000"/><rect x="212" y="97" width="1" height="1" fill="#000000"/><rect x="212" y="99" width="1" height="1" fill="#000000"/><rect x="212" y="101" width="1" height="1" fill="#000000"/><rect x="212" y="103" width="1" height="1" fill="#000000"/><path transform="translate(205.5,88.5)" d="M0,3 C3,10 5,14 7,14 C10,14 12,7 15,1" fill="none" stroke="#0000ff" stroke-width="1.1" shape-rendering="geometricPrecision"/><path transform="translate(205.5,88.5)" d="M4,1 C6,8 8,12 10,12 C13,12 15,11 16,8" fill="none" stroke="#0000ff" stroke-width="1.1" shape-rendering="geometricPrecision"/><rect x="236" y="89" width="1" height="1" fill="#000000"/><rect x="236" y="91" width="1" height="1" fill="#000000"/><rect x="236" y="93" width="1" height="1" fill="#000000"/><rect x="236" y="95" width="1" height="1" fill="#000000"/><rect x="236" y="97" width="1" height="1" fill="#000000"/><rect x="236" y="99" width="1" height="1" fill="#000000"/><rect x="236" y="101" width="1" height="1" fill="#000000"/><rect x="236" y="103" width="1" height="1" fill="#000000"/><path transform="translate(228.5,88.5)" d="M0,1 C4,5 6,7 8,7 C10,7 12,5 16,2" fill="none" stroke="#0000ff" stroke-width="1.1" shape-rendering="geometricPrecision"/><path transform="translate(228.5,88.5)" d="M0,5 C4,9 6,10 8,10 C10,10 12,9 16,6 M0,8 C4,12 6,14 8,14 C10,14 12,12 16,9" fill="none" stroke="#0000ff" stroke-width="1.1" shape-rendering="geometricPrecision"/><circle cx="236" cy="101.5" r="2" fill="#0000ff" stroke="#0000ff" stroke-width="0" shape-rendering="geometricPrecision"/><rect x="259" y="89" width="1" height="1" fill="#000000"/><rect x="259" y="91" width="1" height="1" fill="#000000"/><rect x="259" y="93" width="1" height="1" fill="#000000"/><rect x="259" y="95" width="1" height="1" fill="#000000"/><rect x="259" y="97" width="1" height="1" fill="#000000"/><rect x="259" y="99" width="1" height="1" fill="#000000"/><rect x="259" y="101" width="1" height="1" fill="#000000"/><rect x="259" y="103" width="1" height="1" fill="#000000"/><path transform="translate(251.5,88.5)" d="M0,9 C4,4 6,3 8,3 C10,3 12,4 16,9" fill="none" stroke="#0000ff" stroke-width="1.1" shape-rendering="geometricPrecision"/><path transform="translate(251.5,88.5)" d="M0,12 C4,7 6,6 8,6 C10,6 12,7 16,12 M0,15 C4,10 6,9 8,9 C10,9 12,10 16,15" fill="none" stroke="#0000ff" stroke-width="1.1" shape-rendering="geometricPrecision"/><circle cx="259" cy="91.5" r="2" fill="#0000ff" stroke="#0000ff" stroke-width="0" shape-rendering="geometricPrecision"/><rect x="273" y="87" width="1" height="17" fill="#a0a0a0"/><rect x="274" y="87" width="1" height="17" fill="#ffffff"/><polygon points="281,94 285,89 288,93" fill="#0000ff" shape-rendering="geometricPrecision"/><rect x="282" y="91" width="5" height="3" fill="url(#dthffffff)"/><polygon points="286,88 291,88 291,95 286,95" fill="#ff0000"/><rect x="288" y="89" width="2" height="5" fill="#ffffff"/><rect x="285.5" y="87.5" width="6" height="1" fill="#000000"/><rect x="285.5" y="94.5" width="6" height="1" fill="#000000"/><rect x="285.5" y="87.5" width="1" height="8" fill="#000000"/><rect x="290.5" y="87.5" width="1" height="8" fill="#000000"/><polygon points="280,94 292,94 295,91 295,99 292,103 280,103" fill="#000000"/><rect x="281" y="95" width="10" height="7" fill="#ffff00"/><rect x="281" y="95" width="10" height="7" fill="url(#dth000000)"/><polygon points="292.5,95 294,93 294,99 292.5,101.5" fill="#ffff00"/><rect x="284" y="97" width="4" height="4" fill="#000000"/><rect x="285" y="98" width="2" height="1" fill="#ffffff"/><rect x="303" y="94" width="7" height="1" fill="#000000"/><rect x="304" y="95" width="5" height="1" fill="#000000"/><rect x="305" y="96" width="3" height="1" fill="#000000"/><rect x="306" y="97" width="1" height="1" fill="#000000"/><rect x="316" y="87" width="1" height="17" fill="#a0a0a0"/><rect x="317" y="87" width="1" height="17" fill="#ffffff"/><rect x="322" y="88" width="16" height="15" fill="#ffffff"/><rect x="322" y="88" width="16" height="1" fill="#000000"/><rect x="322" y="102" width="16" height="1" fill="#000000"/><rect x="322" y="88" width="1" height="15" fill="#000000"/><rect x="337" y="88" width="1" height="15" fill="#000000"/><rect x="322" y="88" width="16" height="2" fill="#000000"/><rect x="324" y="91" width="3" height="1" fill="#000000"/><rect x="328" y="91" width="3" height="1" fill="#000000"/><rect x="332" y="91" width="4" height="1" fill="#000000"/><rect x="324" y="93" width="3" height="1" fill="#000000"/><rect x="328" y="93" width="3" height="1" fill="#000000"/><rect x="332" y="93" width="4" height="1" fill="#000000"/><rect x="324" y="95" width="3" height="1" fill="#000000"/><rect x="328" y="95" width="3" height="1" fill="#000000"/><rect x="332" y="95" width="4" height="1" fill="#000000"/><rect x="324" y="97" width="3" height="1" fill="#000000"/><rect x="328" y="97" width="3" height="1" fill="#000000"/><rect x="332" y="97" width="4" height="1" fill="#000000"/><rect x="324" y="99" width="3" height="1" fill="#000000"/><rect x="328" y="99" width="3" height="1" fill="#000000"/><rect x="332" y="99" width="4" height="1" fill="#000000"/><rect x="322" y="101" width="16" height="2" fill="#000000"/><rect x="344" y="87" width="1" height="17" fill="#a0a0a0"/><rect x="345" y="87" width="1" height="17" fill="#ffffff"/><rect x="350" y="88" width="2" height="5" fill="#000000"/><rect x="364" y="88" width="2" height="5" fill="#000000"/><text x="358" y="102.5" font-family="Liberation Sans" font-size="20" font-weight="normal" fill="#000000" text-anchor="middle" >P</text><rect x="372" y="87" width="1" height="17" fill="#a0a0a0"/><rect x="373" y="87" width="1" height="17" fill="#ffffff"/><rect x="375" y="85" width="23" height="22" fill="url(#chk)"/><rect x="375" y="85" width="23" height="1" fill="#a0a0a0"/><rect x="375" y="85" width="1" height="22" fill="#a0a0a0"/><rect x="375" y="106" width="23" height="1" fill="#ffffff"/><rect x="397" y="85" width="1" height="22" fill="#ffffff"/><rect x="379" y="89" width="1" height="1" fill="#800000"/><rect x="380" y="89" width="1" height="1" fill="#800000"/><rect x="383" y="89" width="1" height="1" fill="#800000"/><rect x="384" y="89" width="1" height="1" fill="#800000"/><rect x="379" y="90" width="1" height="1" fill="#800000"/><rect x="380" y="90" width="1" height="1" fill="#800000"/><rect x="383" y="90" width="1" height="1" fill="#800000"/><rect x="384" y="90" width="1" height="1" fill="#800000"/><rect x="380" y="91" width="1" height="1" fill="#800000"/><rect x="381" y="91" width="1" height="1" fill="#800000"/><rect x="382" y="91" width="1" height="1" fill="#800000"/><rect x="383" y="91" width="1" height="1" fill="#800000"/><rect x="380" y="92" width="1" height="1" fill="#800000"/><rect x="381" y="92" width="1" height="1" fill="#800000"/><rect x="382" y="92" width="1" height="1" fill="#800000"/><rect x="383" y="92" width="1" height="1" fill="#800000"/><rect x="379" y="93" width="1" height="1" fill="#800000"/><rect x="380" y="93" width="1" height="1" fill="#800000"/><rect x="383" y="93" width="1" height="1" fill="#800000"/><rect x="384" y="93" width="1" height="1" fill="#800000"/><rect x="379" y="94" width="1" height="1" fill="#800000"/><rect x="380" y="94" width="1" height="1" fill="#800000"/><rect x="383" y="94" width="1" height="1" fill="#800000"/><rect x="384" y="94" width="1" height="1" fill="#800000"/><rect x="387" y="94" width="2" height="8" fill="#000000"/><rect x="386" y="102" width="4" height="1" fill="#000000"/><rect x="385" y="103" width="6" height="1" fill="#000000"/><rect x="386" y="95" width="1" height="1" fill="#000000"/><rect x="385" y="96" width="1" height="1" fill="#000000"/><rect x="384" y="96" width="1" height="1" fill="#000000"/><rect x="383" y="97" width="1" height="1" fill="#000000"/><rect x="382" y="98" width="1" height="1" fill="#000000"/><rect x="382" y="99" width="1" height="1" fill="#000000"/><rect x="389" y="95" width="1" height="1" fill="#000000"/><rect x="390" y="96" width="1" height="1" fill="#000000"/><rect x="391" y="96" width="1" height="1" fill="#000000"/><rect x="392" y="97" width="1" height="1" fill="#000000"/><rect x="393" y="98" width="1" height="1" fill="#000000"/><rect x="393" y="99" width="1" height="1" fill="#000000"/><rect x="380" y="99" width="5" height="1" fill="#000000"/><rect x="381" y="99" width="1" height="1" fill="#ffff00"/><rect x="383" y="99" width="1" height="1" fill="#ffff00"/><rect x="381" y="100" width="3" height="1" fill="#000000"/><rect x="390" y="99" width="5" height="1" fill="#000000"/><rect x="391" y="99" width="1" height="1" fill="#ffff00"/><rect x="393" y="99" width="1" height="1" fill="#ffff00"/><rect x="391" y="100" width="3" height="1" fill="#000000"/><rect x="398" y="85" width="23" height="22" fill="url(#chk)"/><rect x="398" y="85" width="23" height="1" fill="#a0a0a0"/><rect x="398" y="85" width="1" height="22" fill="#a0a0a0"/><rect x="398" y="106" width="23" height="1" fill="#ffffff"/><rect x="420" y="85" width="1" height="22" fill="#ffffff"/><rect x="402" y="89" width="1" height="1" fill="#800000"/><rect x="403" y="89" width="1" height="1" fill="#800000"/><rect x="406" y="89" width="1" height="1" fill="#800000"/><rect x="407" y="89" width="1" height="1" fill="#800000"/><rect x="402" y="90" width="1" height="1" fill="#800000"/><rect x="403" y="90" width="1" height="1" fill="#800000"/><rect x="406" y="90" width="1" height="1" fill="#800000"/><rect x="407" y="90" width="1" height="1" fill="#800000"/><rect x="403" y="91" width="1" height="1" fill="#800000"/><rect x="404" y="91" width="1" height="1" fill="#800000"/><rect x="405" y="91" width="1" height="1" fill="#800000"/><rect x="406" y="91" width="1" height="1" fill="#800000"/><rect x="404" y="92" width="1" height="1" fill="#800000"/><rect x="405" y="92" width="1" height="1" fill="#800000"/><rect x="404" y="93" width="1" height="1" fill="#800000"/><rect x="405" y="93" width="1" height="1" fill="#800000"/><rect x="404" y="94" width="1" height="1" fill="#800000"/><rect x="405" y="94" width="1" height="1" fill="#800000"/><rect x="410" y="94" width="2" height="8" fill="#000000"/><rect x="409" y="102" width="4" height="1" fill="#000000"/><rect x="408" y="103" width="6" height="1" fill="#000000"/><rect x="409" y="95" width="1" height="1" fill="#000000"/><rect x="408" y="96" width="1" height="1" fill="#000000"/><rect x="407" y="96" width="1" height="1" fill="#000000"/><rect x="406" y="97" width="1" height="1" fill="#000000"/><rect x="405" y="98" width="1" height="1" fill="#000000"/><rect x="405" y="99" width="1" height="1" fill="#000000"/><rect x="412" y="95" width="1" height="1" fill="#000000"/><rect x="413" y="96" width="1" height="1" fill="#000000"/><rect x="414" y="96" width="1" height="1" fill="#000000"/><rect x="415" y="97" width="1" height="1" fill="#000000"/><rect x="416" y="98" width="1" height="1" fill="#000000"/><rect x="416" y="99" width="1" height="1" fill="#000000"/><rect x="403" y="99" width="5" height="1" fill="#000000"/><rect x="404" y="99" width="1" height="1" fill="#ffff00"/><rect x="406" y="99" width="1" height="1" fill="#ffff00"/><rect x="404" y="100" width="3" height="1" fill="#000000"/><rect x="413" y="99" width="5" height="1" fill="#000000"/><rect x="414" y="99" width="1" height="1" fill="#ffff00"/><rect x="416" y="99" width="1" height="1" fill="#ffff00"/><rect x="414" y="100" width="3" height="1" fill="#000000"/><rect x="423" y="87" width="1" height="17" fill="#a0a0a0"/><rect x="424" y="87" width="1" height="17" fill="#ffffff"/><polyline points="31.5,124.5 36.5,129.5" fill="none" stroke="#000000" stroke-width="2.0" shape-rendering="geometricPrecision"/><path transform="translate(21.5,114.5)" d="M4.5,0 L9,0 L12.5,3.5 L12.5,8 L9,11.5 L4.5,11.5 L1,8 L1,3.5 Z" fill="#ffffff" stroke="#000000" stroke-width="1.35" shape-rendering="geometricPrecision"/><polyline points="24.0,118.5 26.0,116.5" fill="none" stroke="#00ffff" stroke-width="1" shape-rendering="geometricPrecision"/><polyline points="30.0,125.0 32.0,123.0" fill="none" stroke="#00ffff" stroke-width="1" shape-rendering="geometricPrecision"/><rect x="24" y="119" width="7" height="2" fill="#000000"/><rect x="26.5" y="116.5" width="2" height="7" fill="#000000"/><polyline points="54.5,124.5 59.5,129.5" fill="none" stroke="#000000" stroke-width="2.0" shape-rendering="geometricPrecision"/><path transform="translate(44.5,114.5)" d="M4.5,0 L9,0 L12.5,3.5 L12.5,8 L9,11.5 L4.5,11.5 L1,8 L1,3.5 Z" fill="#ffffff" stroke="#000000" stroke-width="1.35" shape-rendering="geometricPrecision"/><polyline points="47.0,118.5 49.0,116.5" fill="none" stroke="#00ffff" stroke-width="1" shape-rendering="geometricPrecision"/><polyline points="53.0,125.0 55.0,123.0" fill="none" stroke="#00ffff" stroke-width="1" shape-rendering="geometricPrecision"/><rect x="47" y="119" width="7" height="2" fill="#000000"/><polyline points="77.5,124.5 82.5,129.5" fill="none" stroke="#000000" stroke-width="2.0" shape-rendering="geometricPrecision"/><path transform="translate(67.5,114.5)" d="M4.5,0 L9,0 L12.5,3.5 L12.5,8 L9,11.5 L4.5,11.5 L1,8 L1,3.5 Z" fill="#ffffff" stroke="#000000" stroke-width="1.35" shape-rendering="geometricPrecision"/><polyline points="70.0,118.5 72.0,116.5" fill="none" stroke="#00ffff" stroke-width="1" shape-rendering="geometricPrecision"/><polyline points="76.0,125.0 78.0,123.0" fill="none" stroke="#00ffff" stroke-width="1" shape-rendering="geometricPrecision"/><rect x="69" y="117" width="9" height="6" fill="#ffffff"/><rect x="69" y="117" width="9" height="1" fill="#000080"/><rect x="69" y="122" width="9" height="1" fill="#000080"/><rect x="69" y="117" width="1" height="6" fill="#000080"/><rect x="77" y="117" width="1" height="6" fill="#000080"/><path transform="translate(67.5,114.5)" d="M3,7 L5,5 L6,7 L8,5 L9,7" fill="none" stroke="#ff0000" stroke-width="1" shape-rendering="geometricPrecision"/><rect x="89" y="113" width="1" height="17" fill="#a0a0a0"/><rect x="90" y="113" width="1" height="17" fill="#ffffff"/><circle cx="103" cy="122" r="6.5" fill="#f0f0f0" stroke="#a0a0a0" stroke-width="1.2" shape-rendering="geometricPrecision"/><circle cx="104.5" cy="123.5" r="6" fill="url(#dtha0a0a0)"/><path transform="translate(95.5,114.5)" d="M2,6 H10 M6,2 V10 M3,3 C5,5 8,5 11,3" fill="none" stroke="#a0a0a0" stroke-width="1" shape-rendering="geometricPrecision"/><text x="126" y="129" font-family="Liberation Serif" font-size="21" font-weight="bold" fill="#000000" text-anchor="middle" >F</text><rect x="455" y="35" width="23" height="22" fill="url(#chk)"/><rect x="455" y="35" width="23" height="1" fill="#a0a0a0"/><rect x="455" y="35" width="1" height="22" fill="#a0a0a0"/><rect x="455" y="56" width="23" height="1" fill="#ffffff"/><rect x="477" y="35" width="1" height="22" fill="#ffffff"/><polygon points="463,40 463,50.5 465.6,48.2 468,53 470.3,52 468,47.4 471.6,47.4" fill="#000000" shape-rendering="geometricPrecision"/><polyline points="481.5,46.5 484.5,43.5 488.5,47.5 492.5,43.5 496.5,47.5 497.5,46.5" fill="none" stroke="#000000" stroke-width="1" shape-rendering="geometricPrecision"/><text x="512" y="53" font-family="Liberation Serif" font-size="20" font-weight="bold" fill="#000000" text-anchor="middle" >T</text><rect x="527" y="39" width="3" height="3" fill="#000000"/><polyline points="529.5,40.5 536.5,40.5 536.5,50.5 542.5,50.5" fill="none" stroke="#000000" stroke-width="1"/><rect x="550" y="38" width="3" height="3" fill="#000000"/><polyline points="551.5,39.5 565.5,53.5" fill="none" stroke="#000000" stroke-width="1"/><rect x="573.5" y="38.5" width="14" height="13" rx="2" fill="#ffff00" stroke="#000000" stroke-width="1.4" shape-rendering="geometricPrecision"/><rect x="576" y="41" width="9" height="3" fill="#c0c0c0"/><rect x="576" y="41" width="9" height="1" fill="#606060"/><rect x="576" y="43" width="9" height="1" fill="#606060"/><rect x="576" y="41" width="1" height="3" fill="#606060"/><rect x="584" y="41" width="1" height="3" fill="#606060"/><rect x="578" y="42" width="2" height="1" fill="#000000"/><rect x="582" y="42" width="2" height="1" fill="#000000"/><rect x="576" y="46" width="2" height="2" fill="#a0a0ff"/><rect x="583" y="46" width="2" height="2" fill="#a0a0ff"/><rect x="576" y="49" width="9" height="1" fill="#000000"/><rect x="574" y="52" width="3" height="2" fill="#000000"/><rect x="584" y="52" width="3" height="2" fill="#000000"/><polyline points="596.5,45.5 603.5,38.5" fill="none" stroke="#000000" stroke-width="1"/><rect x="605" y="38" width="8" height="7" fill="#ffffff"/><rect x="605" y="38" width="8" height="1" fill="#000000"/><rect x="605" y="44" width="8" height="1" fill="#000000"/><rect x="605" y="38" width="1" height="7" fill="#000000"/><rect x="612" y="38" width="1" height="7" fill="#000000"/><path transform="translate(596.5,38.5)" d="M3.5,8 L7,11.5 L3.5,15 L0,11.5 Z" fill="#ffffff" stroke="#000000" stroke-width="1" shape-rendering="geometricPrecision"/><circle cx="609" cy="50" r="3.5" fill="#ffffff" stroke="#000000" stroke-width="1" shape-rendering="geometricPrecision"/><rect x="620" y="44" width="7" height="1" fill="#000000"/><rect x="621" y="45" width="5" height="1" fill="#000000"/><rect x="622" y="46" width="3" height="1" fill="#000000"/><rect x="623" y="47" width="1" height="1" fill="#000000"/><rect x="634" y="38" width="2" height="16" fill="#000000"/><rect x="634" y="38" width="15" height="1" fill="#000000"/><rect x="634" y="46" width="15" height="1" fill="#000000"/><rect x="634" y="38" width="1" height="9" fill="#000000"/><rect x="648" y="38" width="1" height="9" fill="#000000"/><circle cx="663.5" cy="40.5" r="2.6" fill="#000000" stroke="#000000" stroke-width="0" shape-rendering="geometricPrecision"/><rect x="660" y="44" width="6" height="2" fill="#000000"/><rect x="662" y="44" width="4" height="8" fill="#000000"/><rect x="659" y="51" width="9" height="2" fill="#000000"/><polygon points="680,38 680,49.5 682.6,47.2 685,52 687.3,51 685,46.4 688.6,46.4" fill="#000000" shape-rendering="geometricPrecision"/><text x="687" y="49" font-family="Liberation Serif" font-size="15" font-weight="bold" fill="#000080" text-anchor="start" >?</text><circle cx="708" cy="44" r="5.5" fill="#0000ff" stroke="#000000" stroke-width="0.8" shape-rendering="geometricPrecision"/><path transform="translate(702.5,38.5)" d="M2,4 C4,2 6,5 5,7 M7,2 C9,3 8,6 10,6" fill="none" stroke="#00c000" stroke-width="2" shape-rendering="geometricPrecision"/><rect x="707" y="39" width="2" height="2" fill="#ffff00"/><path transform="translate(702.5,38.5)" d="M11,2 C13,1 15,2 15,5" fill="none" stroke="#800000" stroke-width="1.3" shape-rendering="geometricPrecision"/><polygon points="715,42 718.5,42 717,45" fill="#800000"/><rect x="707" y="44" width="9" height="10" fill="#ffffff"/><rect x="707" y="44" width="9" height="1" fill="#000000"/><rect x="707" y="53" width="9" height="1" fill="#000000"/><rect x="707" y="44" width="1" height="10" fill="#000000"/><rect x="715" y="44" width="1" height="10" fill="#000000"/><rect x="709" y="47" width="5" height="1" fill="#000080"/><rect x="709" y="49" width="5" height="1" fill="#000080"/><rect x="709" y="51" width="5" height="1" fill="#000080"/><rect x="725" y="38" width="16" height="15" fill="#ffffff"/><rect x="725" y="38" width="16" height="1" fill="#000000"/><rect x="725" y="52" width="16" height="1" fill="#000000"/><rect x="725" y="38" width="1" height="15" fill="#000000"/><rect x="740" y="38" width="1" height="15" fill="#000000"/><circle cx="731" cy="43.5" r="3.6" fill="#008000" stroke="#008000" stroke-width="0.5" shape-rendering="geometricPrecision"/><rect x="730.5" y="41" width="1.5" height="3.5" fill="#ffffff"/><rect x="730.5" y="45.5" width="1.5" height="1.2" fill="#ffffff"/><circle cx="735.5" cy="48" r="3.6" fill="#ff0000" stroke="#ff0000" stroke-width="0.5" shape-rendering="geometricPrecision"/><path transform="translate(725.5,38.5)" d="M8.5,8.5 L11.5,11.5 M11.5,8.5 L8.5,11.5" fill="none" stroke="#ffffff" stroke-width="1.3" shape-rendering="geometricPrecision"/><rect x="748" y="37" width="1" height="17" fill="#a0a0a0"/><rect x="749" y="37" width="1" height="17" fill="#ffffff"/><rect x="751" y="35" width="23" height="22" fill="url(#chk)"/><rect x="751" y="35" width="23" height="1" fill="#a0a0a0"/><rect x="751" y="35" width="1" height="22" fill="#a0a0a0"/><rect x="751" y="56" width="23" height="1" fill="#ffffff"/><rect x="773" y="35" width="1" height="22" fill="#ffffff"/><text x="763" y="50.5" font-family="Liberation Mono" font-size="8" font-weight="bold" fill="#000000" text-anchor="middle" textLength="16" lengthAdjust="spacingAndGlyphs">TEXT</text><rect x="774" y="35" width="23" height="22" fill="url(#chk)"/><rect x="774" y="35" width="23" height="1" fill="#a0a0a0"/><rect x="774" y="35" width="1" height="22" fill="#a0a0a0"/><rect x="774" y="56" width="23" height="1" fill="#ffffff"/><rect x="796" y="35" width="1" height="22" fill="#ffffff"/><text x="786.5" y="46" font-family="Liberation Mono" font-size="8" font-weight="bold" fill="#000000" text-anchor="middle" >R1</text><polyline points="778.5,50.5 780.5,48.5 783.5,52.5 786.5,48.5 789.5,52.5 792.5,48.5 794.5,51.5" fill="none" stroke="#000000" stroke-width="1" shape-rendering="geometricPrecision"/><rect x="800" y="40" width="9" height="9" fill="#ffffff"/><rect x="800" y="40" width="9" height="1" fill="#000000"/><rect x="800" y="48" width="9" height="1" fill="#000000"/><rect x="800" y="40" width="1" height="9" fill="#000000"/><rect x="808" y="40" width="1" height="9" fill="#000000"/><text x="804.7" y="47.3" font-family="Liberation Mono" font-size="8" font-weight="bold" fill="#000000" text-anchor="middle" >1</text><rect x="803" y="49" width="1" height="4" fill="#000000"/><polyline points="809.5,42.5 812.5,46.5 816.5,43.5" fill="none" stroke="#000000" stroke-width="1" shape-rendering="geometricPrecision"/><text x="823" y="44" font-family="Liberation Mono" font-size="8" font-weight="normal" fill="#a0a0a0" text-anchor="start" textLength="12" lengthAdjust="spacingAndGlyphs">VIP</text><polyline points="826.5,48.5 829.5,51.5 838.5,40.5" fill="none" stroke="#a0a0a0" stroke-width="1.6" shape-rendering="geometricPrecision"/><rect x="847" y="44" width="7" height="1" fill="#a0a0a0"/><rect x="848" y="45" width="5" height="1" fill="#a0a0a0"/><rect x="849" y="46" width="3" height="1" fill="#a0a0a0"/><rect x="850" y="47" width="1" height="1" fill="#a0a0a0"/><rect x="860" y="40" width="12" height="9" fill="#ffffff"/><rect x="860" y="40" width="12" height="1" fill="#800000"/><rect x="860" y="48" width="12" height="1" fill="#800000"/><rect x="860" y="40" width="1" height="9" fill="#800000"/><rect x="871" y="40" width="1" height="9" fill="#800000"/><text x="866.2" y="47.3" font-family="Liberation Mono" font-size="8" font-weight="bold" fill="#000000" text-anchor="middle" textLength="8" lengthAdjust="spacingAndGlyphs">13</text><rect x="865" y="49" width="1" height="4" fill="#000000"/><polyline points="872.5,47.5 876.5,43.5" fill="none" stroke="#000000" stroke-width="1" shape-rendering="geometricPrecision"/><rect x="884" y="42" width="12" height="1" fill="#0000ff"/><polygon points="894,39.5 894,45.5 898,42.5" fill="#0000ff"/><rect x="884" y="49" width="14" height="1" fill="#000000"/><polygon points="888,47 888,52 891,49.5" fill="#000000"/><rect x="891" y="47" width="1" height="5" fill="#000000"/><polygon points="895,47 895,52 892,49.5" fill="#000000"/><polyline points="908.5,39.5 912.5,40.5" fill="none" stroke="#a0a0a0" stroke-width="2" shape-rendering="geometricPrecision"/><path transform="translate(906.5,38.5)" d="M8,2 C11,4 11,9 8,9 C5,9 5,5 8,2 Z" fill="#ffff00" stroke="#ffff00" stroke-width="0.5" shape-rendering="geometricPrecision"/><path transform="translate(906.5,38.5)" d="M8,5 L9.5,7 L8,9 L6.5,7 Z" fill="#ff0000" stroke="#ff0000" stroke-width="0.5" shape-rendering="geometricPrecision"/><rect x="907" y="49" width="14" height="1" fill="#000000"/><polygon points="911,47 911,52 914,49.5" fill="#000000"/><rect x="914" y="47" width="1" height="5" fill="#000000"/><polygon points="918,47 918,52 915,49.5" fill="#000000"/><text x="937" y="45" font-family="Liberation Mono" font-size="9" font-weight="normal" fill="#0000ff" text-anchor="middle" textLength="13" lengthAdjust="spacingAndGlyphs">ON</text><rect x="930" y="49" width="14" height="1" fill="#000000"/><polygon points="934,47 934,52 937,49.5" fill="#000000"/><rect x="937" y="47" width="1" height="5" fill="#000000"/><polygon points="941,47 941,52 938,49.5" fill="#000000"/><rect x="953" y="45" width="15" height="1" fill="#000000"/><rect x="952" y="44" width="3" height="3" fill="#000000"/><rect x="966" y="44" width="3" height="3" fill="#000000"/><rect x="976" y="45" width="16" height="1" fill="#000000"/><rect x="984" y="38" width="1" height="15" fill="#000000"/><rect x="999" y="39" width="1" height="1" fill="#000000"/><rect x="999" y="43" width="1" height="1" fill="#000000"/><rect x="999" y="47" width="1" height="1" fill="#000000"/><rect x="999" y="51" width="1" height="1" fill="#000000"/><rect x="1003" y="39" width="1" height="1" fill="#000000"/><rect x="1003" y="43" width="1" height="1" fill="#000000"/><rect x="1003" y="47" width="1" height="1" fill="#000000"/><rect x="1003" y="51" width="1" height="1" fill="#000000"/><rect x="1007" y="39" width="1" height="1" fill="#000000"/><rect x="1007" y="43" width="1" height="1" fill="#000000"/><rect x="1007" y="47" width="1" height="1" fill="#000000"/><rect x="1007" y="51" width="1" height="1" fill="#000000"/><rect x="1011" y="39" width="1" height="1" fill="#000000"/><rect x="1011" y="43" width="1" height="1" fill="#000000"/><rect x="1011" y="47" width="1" height="1" fill="#000000"/><rect x="1011" y="51" width="1" height="1" fill="#000000"/><rect x="1015" y="39" width="1" height="1" fill="#000000"/><rect x="1015" y="43" width="1" height="1" fill="#000000"/><rect x="1015" y="47" width="1" height="1" fill="#000000"/><rect x="1015" y="51" width="1" height="1" fill="#000000"/><rect x="1023" y="44" width="7" height="1" fill="#000000"/><rect x="1024" y="45" width="5" height="1" fill="#000000"/><rect x="1025" y="46" width="3" height="1" fill="#000000"/><rect x="1026" y="47" width="1" height="1" fill="#000000"/><rect x="1037" y="38" width="16" height="1" fill="#000000"/><rect x="1037" y="52" width="16" height="1" fill="#000000"/><rect x="1037" y="38" width="1" height="15" fill="#000000"/><rect x="1052" y="38" width="1" height="15" fill="#000000"/><rect x="1060" y="38" width="16" height="1" fill="#000000"/><rect x="1060" y="52" width="16" height="1" fill="#000000"/><rect x="1060" y="38" width="1" height="15" fill="#000000"/><rect x="1075" y="38" width="1" height="15" fill="#000000"/><rect x="1067" y="47" width="9" height="1" fill="#000000"/><rect x="1067" y="52" width="9" height="1" fill="#000000"/><rect x="1067" y="47" width="1" height="6" fill="#000000"/><rect x="1075" y="47" width="1" height="6" fill="#000000"/><rect x="1067" y="50" width="9" height="1" fill="#000000"/><rect x="1080" y="35" width="23" height="22" fill="url(#chk)"/><rect x="1080" y="35" width="23" height="1" fill="#a0a0a0"/><rect x="1080" y="35" width="1" height="22" fill="#a0a0a0"/><rect x="1080" y="56" width="23" height="1" fill="#ffffff"/><rect x="1102" y="35" width="1" height="22" fill="#ffffff"/><polyline points="1088.5,39.5 1088.5,42.5 1091.5,42.5 1091.5,44.5 1093.5,46.5 1091.5,48.5 1091.5,50.5 1088.5,50.5 1088.5,54.5" fill="none" stroke="#000000" stroke-width="1.2" shape-rendering="geometricPrecision"/><polygon points="1092,45 1092,53.5 1094,51.7 1096,55 1098,54 1096,50.8 1098.6,50.8" fill="#000000" shape-rendering="geometricPrecision"/><rect x="1105" y="37" width="1" height="17" fill="#a0a0a0"/><rect x="1106" y="37" width="1" height="17" fill="#ffffff"/><rect x="1111" y="42" width="12" height="11" fill="#ffffff"/><rect x="1111" y="42" width="12" height="1" fill="#000000"/><rect x="1111" y="52" width="12" height="1" fill="#000000"/><rect x="1111" y="42" width="1" height="11" fill="#000000"/><rect x="1122" y="42" width="1" height="11" fill="#000000"/><rect x="1113" y="48" width="2" height="1" fill="#000000"/><rect x="1116" y="48" width="5" height="1" fill="#000000"/><rect x="1113" y="50" width="2" height="1" fill="#000000"/><rect x="1116" y="50" width="5" height="1" fill="#000000"/><rect x="1113" y="44" width="1" height="2" fill="#000000"/><rect x="1114" y="45" width="1" height="1" fill="#000000"/><path transform="translate(1111.5,38.5)" d="M3,6.5 L7.5,1 L12.5,1 L13.5,4.5 L11,7 L8.5,6 L6.5,8.5 Z" fill="#ffffff" stroke="#000000" stroke-width="1" shape-rendering="geometricPrecision"/><polygon points="1115,44 1119,40 1122,43 1118,47" fill="url(#dth000000)"/><rect x="1125" y="39" width="2" height="5" fill="#000080"/><rect x="1126" y="44" width="1" height="2" fill="#000080"/><rect x="1133" y="37" width="1" height="17" fill="#a0a0a0"/><rect x="1134" y="37" width="1" height="17" fill="#ffffff"/><rect x="1140" y="40" width="8" height="1" fill="#a0a0a0"/><rect x="1140" y="47" width="8" height="1" fill="#a0a0a0"/><rect x="1140" y="40" width="1" height="8" fill="#a0a0a0"/><rect x="1147" y="40" width="1" height="8" fill="#a0a0a0"/><rect x="1144" y="44" width="9" height="1" fill="#a0a0a0"/><rect x="1144" y="52" width="9" height="1" fill="#a0a0a0"/><rect x="1144" y="44" width="1" height="9" fill="#a0a0a0"/><rect x="1152" y="44" width="1" height="9" fill="#a0a0a0"/><rect x="1139" y="39" width="3" height="3" fill="#a0a0a0"/><rect x="1147" y="39" width="3" height="3" fill="#a0a0a0"/><rect x="1139" y="47" width="3" height="3" fill="#a0a0a0"/><rect x="1143" y="43" width="3" height="3" fill="#a0a0a0"/><rect x="1152" y="43" width="3" height="3" fill="#a0a0a0"/><rect x="1143" y="52" width="3" height="3" fill="#a0a0a0"/><rect x="1152" y="52" width="3" height="3" fill="#a0a0a0"/><rect x="1147" y="47" width="3" height="3" fill="#a0a0a0"/><polygon points="1165,42.5 1165,48.5 1169.5,45.5" fill="#a0a0a0"/><polygon points="1175,42.5 1175,48.5 1170.5,45.5" fill="#a0a0a0"/><rect x="1163" y="45" width="14" height="1" fill="#a0a0a0"/><path transform="translate(1185.5,38.5)" d="M3,4 L8,1 L12,3 L14,8 L12,12 L8,14 L4,13" fill="none" stroke="#a0a0a0" stroke-width="1.2" shape-rendering="geometricPrecision"/><polygon points="1186,39 1191,41 1187,44" fill="#a0a0a0"/><rect x="1193" y="45" width="2" height="2" fill="#a0a0a0"/><rect x="1216" y="38" width="1" height="16" fill="#a0a0a0"/><path transform="translate(1208.5,38.5)" d="M8,5 L3,6 L1,9 L3,12 L8,13" fill="none" stroke="#a0a0a0" stroke-width="1.2" shape-rendering="geometricPrecision"/><rect x="1217" y="43" width="4" height="1" fill="#a0a0a0"/><polygon points="1220,40.5 1220,46.5 1223,43.5" fill="#a0a0a0"/><rect x="1218" y="50" width="4" height="1" fill="#a0a0a0"/><rect x="1231" y="45" width="16" height="1" fill="#a0a0a0"/><rect x="1235" y="41" width="1" height="4" fill="#a0a0a0"/><polygon points="1232.5,43 1238.5,43 1235.5,39.5" fill="#a0a0a0"/><path transform="translate(1231.5,38.5)" d="M5,8 L6,12 L9,14 L11,12 L13,3" fill="none" stroke="#a0a0a0" stroke-width="1.2" shape-rendering="geometricPrecision"/><rect x="1253" y="37" width="1" height="17" fill="#a0a0a0"/><rect x="1254" y="37" width="1" height="17" fill="#ffffff"/><polygon points="1260,42 1261,39 1263,39 1264,42 1265,42 1266,39 1268,39 1269,42 1269,46 1265,46 1265,43 1264,43 1264,46 1260,46" fill="#000000"/><rect x="1261" y="41" width="1" height="2" fill="#ffffff"/><rect x="1266" y="41" width="1" height="2" fill="#ffffff"/><polyline points="1261.5,50.5 1263.5,50.5 1264.5,49.5 1266.5,51.5 1268.5,49.5 1270.5,51.5 1271.5,50.5 1273.5,50.5" fill="none" stroke="#000080" stroke-width="1" shape-rendering="geometricPrecision"/><polygon points="1282,47 1285,39 1288,39 1289,43 1291,43 1292,39 1295,39 1298,47 1298,52 1292,52 1292,46 1288,46 1288,52 1282,52" fill="#000000"/><rect x="1286" y="41" width="1" height="2" fill="#ffffff"/><rect x="1293" y="41" width="1" height="2" fill="#ffffff"/><rect x="1284" y="48" width="1" height="3" fill="#ffffff"/><rect x="1294" y="48" width="1" height="3" fill="#ffffff"/><rect x="1304" y="37" width="1" height="17" fill="#a0a0a0"/><rect x="1305" y="37" width="1" height="17" fill="#ffffff"/><rect x="1311" y="39" width="15" height="1" fill="#a0a0a0"/><rect x="1311" y="48" width="15" height="1" fill="#a0a0a0"/><rect x="1311" y="39" width="1" height="10" fill="#a0a0a0"/><rect x="1325" y="39" width="1" height="10" fill="#a0a0a0"/><rect x="1310" y="38" width="17" height="2" fill="#a0a0a0"/><rect x="1314" y="42" width="4" height="1" fill="#a0a0a0"/><rect x="1319" y="42" width="5" height="1" fill="#a0a0a0"/><rect x="1319" y="44" width="5" height="1" fill="#a0a0a0"/><rect x="1319" y="46" width="5" height="1" fill="#a0a0a0"/><polyline points="1314.5,44.5 1317.5,46.5" fill="none" stroke="#a0a0a0" stroke-width="1"/><polyline points="1317.5,44.5 1314.5,46.5" fill="none" stroke="#a0a0a0" stroke-width="1"/><rect x="1318" y="49" width="1" height="3" fill="#a0a0a0"/><polyline points="1318.5,50.5 1314.5,53.5" fill="none" stroke="#a0a0a0" stroke-width="1"/><polyline points="1318.5,50.5 1322.5,53.5" fill="none" stroke="#a0a0a0" stroke-width="1"/><rect x="1332" y="37" width="1" height="17" fill="#a0a0a0"/><rect x="1333" y="37" width="1" height="17" fill="#ffffff"/><polygon points="1343,38 1349,38 1354,43 1354,49 1349,54 1343,54 1338,49 1338,43" fill="#a0a0a0" shape-rendering="geometricPrecision"/><rect x="1345" y="41" width="2" height="6" fill="#ffffff"/><rect x="1345" y="49" width="2" height="2" fill="#ffffff"/><polygon points="1366,38 1372,38 1377,43 1377,49 1372,54 1366,54 1361,49 1361,43" fill="#a0a0a0" shape-rendering="geometricPrecision"/><path transform="translate(1361.5,38.5)" d="M4.5,5 L10.5,10.5 M10.5,5 L4.5,10.5" fill="none" stroke="#ffffff" stroke-width="2" shape-rendering="geometricPrecision"/><rect x="1383" y="37" width="1" height="17" fill="#a0a0a0"/><rect x="1384" y="37" width="1" height="17" fill="#ffffff"/><rect x="1389" y="38" width="8" height="8" fill="#a0a0a0"/><rect x="1397" y="46" width="8" height="8" fill="#a0a0a0"/><rect x="1393" y="41" width="8" height="9" fill="#f0f0f0"/><rect x="1393" y="41" width="8" height="9" fill="url(#dtha0a0a0)"/><rect x="1393" y="41" width="8" height="1" fill="#a0a0a0"/><rect x="1393" y="49" width="8" height="1" fill="#a0a0a0"/><rect x="1393" y="41" width="1" height="9" fill="#a0a0a0"/><rect x="1400" y="41" width="1" height="9" fill="#a0a0a0"/><rect x="1412" y="38" width="8" height="8" fill="#a0a0a0"/><rect x="1420" y="46" width="8" height="8" fill="#a0a0a0"/><rect x="1416" y="41" width="8" height="9" fill="#f0f0f0"/><rect x="1416" y="41" width="8" height="9" fill="url(#dtha0a0a0)"/><rect x="1416" y="41" width="8" height="1" fill="#a0a0a0"/><rect x="1416" y="49" width="8" height="1" fill="#a0a0a0"/><rect x="1416" y="41" width="1" height="9" fill="#a0a0a0"/><rect x="1423" y="41" width="1" height="9" fill="#a0a0a0"/><polyline points="1418.5,47.5 1422.5,43.5" fill="none" stroke="#f0f0f0" stroke-width="2" shape-rendering="geometricPrecision"/><rect x="1434" y="37" width="1" height="17" fill="#a0a0a0"/><rect x="1435" y="37" width="1" height="17" fill="#ffffff"/><rect x="1440" y="45" width="5" height="1" fill="#000000"/><rect x="1442" y="43" width="1" height="5" fill="#000000"/><path transform="translate(1440.5,38.5)" d="M9,1 H15 V13 H6 V4 Z M6,4 H9 V1" fill="#ffffff" stroke="#000000" stroke-width="1.15" shape-rendering="geometricPrecision"/><rect x="1463" y="45" width="5" height="1" fill="#000000"/><path transform="translate(1463.5,38.5)" d="M9,1 H15 V13 H6 V4 Z M6,4 H9 V1" fill="#ffffff" stroke="#000000" stroke-width="1.15" shape-rendering="geometricPrecision"/><rect x="1485" y="37" width="1" height="17" fill="#a0a0a0"/><rect x="1486" y="37" width="1" height="17" fill="#ffffff"/><polyline points="468.5,74.5 473.5,79.5" fill="none" stroke="#000000" stroke-width="2.0" shape-rendering="geometricPrecision"/><path transform="translate(458.5,64.5)" d="M4.5,0 L9,0 L12.5,3.5 L12.5,8 L9,11.5 L4.5,11.5 L1,8 L1,3.5 Z" fill="#ffffff" stroke="#000000" stroke-width="1.35" shape-rendering="geometricPrecision"/><polyline points="461.0,68.5 463.0,66.5" fill="none" stroke="#00ffff" stroke-width="1" shape-rendering="geometricPrecision"/><polyline points="467.0,75.0 469.0,73.0" fill="none" stroke="#00ffff" stroke-width="1" shape-rendering="geometricPrecision"/><rect x="461" y="69" width="7" height="2" fill="#000000"/><rect x="463.5" y="66.5" width="2" height="7" fill="#000000"/><polyline points="491.5,74.5 496.5,79.5" fill="none" stroke="#000000" stroke-width="2.0" shape-rendering="geometricPrecision"/><path transform="translate(481.5,64.5)" d="M4.5,0 L9,0 L12.5,3.5 L12.5,8 L9,11.5 L4.5,11.5 L1,8 L1,3.5 Z" fill="#ffffff" stroke="#000000" stroke-width="1.35" shape-rendering="geometricPrecision"/><polyline points="484.0,68.5 486.0,66.5" fill="none" stroke="#00ffff" stroke-width="1" shape-rendering="geometricPrecision"/><polyline points="490.0,75.0 492.0,73.0" fill="none" stroke="#00ffff" stroke-width="1" shape-rendering="geometricPrecision"/><rect x="484" y="69" width="7" height="2" fill="#000000"/><rect x="503" y="63" width="1" height="17" fill="#a0a0a0"/><rect x="504" y="63" width="1" height="17" fill="#ffffff"/><rect x="511" y="64" width="13" height="9" fill="url(#dtha0a0a0)"/><rect x="510" y="64" width="1" height="16" fill="#a0a0a0"/><rect x="510" y="64" width="14" height="1" fill="#a0a0a0"/><rect x="510" y="72" width="14" height="1" fill="#a0a0a0"/><rect x="510" y="64" width="1" height="9" fill="#a0a0a0"/><rect x="523" y="64" width="1" height="9" fill="#a0a0a0"/><rect x="533" y="70" width="7" height="1" fill="#a0a0a0"/><rect x="534" y="71" width="5" height="1" fill="#a0a0a0"/><rect x="535" y="72" width="3" height="1" fill="#a0a0a0"/><rect x="536" y="73" width="1" height="1" fill="#a0a0a0"/><rect x="546" y="63" width="1" height="17" fill="#a0a0a0"/><rect x="547" y="63" width="1" height="17" fill="#ffffff"/><rect x="553" y="67" width="15" height="11" fill="url(#dtha0a0a0)"/><rect x="553" y="67" width="15" height="1" fill="#a0a0a0"/><rect x="553" y="77" width="15" height="1" fill="#a0a0a0"/><rect x="553" y="67" width="1" height="11" fill="#a0a0a0"/><rect x="567" y="67" width="1" height="11" fill="#a0a0a0"/><rect x="555" y="65" width="6" height="2" fill="url(#dtha0a0a0)"/><rect x="555" y="65" width="6" height="1" fill="#a0a0a0"/><rect x="558" y="71" width="5" height="3" fill="#a0a0a0"/><rect x="574" y="63" width="1" height="17" fill="#a0a0a0"/><rect x="575" y="63" width="1" height="17" fill="#ffffff"/><circle cx="588" cy="72" r="6.5" fill="#f0f0f0" stroke="#a0a0a0" stroke-width="1.2" shape-rendering="geometricPrecision"/><circle cx="589.5" cy="73.5" r="6" fill="url(#dtha0a0a0)"/><path transform="translate(580.5,64.5)" d="M2,6 H10 M6,2 V10 M3,3 C5,5 8,5 11,3" fill="none" stroke="#a0a0a0" stroke-width="1" shape-rendering="geometricPrecision"/><text x="611" y="79" font-family="Liberation Serif" font-size="21" font-weight="bold" fill="#a0a0a0" text-anchor="middle" >F</text></g>
<g shape-rendering="crispEdges"><rect x="17" y="8" width="16" height="16" fill="#ffffff"/><rect x="17" y="8" width="16" height="1" fill="#000000"/><rect x="17" y="23" width="16" height="1" fill="#000000"/><rect x="17" y="8" width="1" height="16" fill="#000000"/><rect x="32" y="8" width="1" height="16" fill="#000000"/><rect x="18" y="9" width="14" height="2" fill="#0000ff"/><rect x="21" y="13" width="9" height="1" fill="#808080"/><rect x="19" y="16" width="1" height="1" fill="#808080"/><rect x="19" y="18" width="1" height="1" fill="#808080"/><rect x="19" y="20" width="1" height="1" fill="#808080"/><rect x="21" y="15" width="10" height="7" fill="#00ffff"/><rect x="21" y="15" width="10" height="1" fill="#000000"/><rect x="21" y="21" width="10" height="1" fill="#000000"/><rect x="21" y="15" width="1" height="7" fill="#000000"/><rect x="30" y="15" width="1" height="7" fill="#000000"/><path transform="translate(17.5,8.5)" d="M5,12 C7,9 11,9 13,12" fill="none" stroke="#000000" stroke-width="1" shape-rendering="geometricPrecision"/><rect x="454" y="10" width="16" height="16" fill="#d4d0c8"/><rect x="454" y="10" width="16" height="1" fill="#000000"/><rect x="454" y="25" width="16" height="1" fill="#000000"/><rect x="454" y="10" width="1" height="16" fill="#000000"/><rect x="469" y="10" width="1" height="16" fill="#000000"/><rect x="463" y="23" width="6" height="2" fill="#ffffff"/><rect x="464" y="24" width="4" height="1" fill="#808080"/><path transform="translate(454.5,10.5)" d="M2,13 V5 H6 M4,5 V2 M4,13 H9 M6,2 V13 M6,7 H12 M9,5 L11,9 M11,4 V10" fill="none" stroke="#2060e0" stroke-width="1" shape-rendering="geometricPrecision"/><rect x="465" y="13" width="3" height="1" fill="#ff0000"/><rect x="460" y="15" width="3" height="1" fill="#ff0000"/><rect x="465" y="15" width="3" height="1" fill="#ff0000"/><rect x="465" y="19" width="3" height="1" fill="#ff0000"/><rect x="456" y="14" width="2" height="2" fill="#0000ff"/><rect x="455" y="18" width="2" height="2" fill="#0000ff"/><rect x="456" y="22" width="2" height="2" fill="#0000ff"/><rect x="463" y="14" width="2" height="2" fill="#0000ff"/><rect x="462" y="17" width="2" height="2" fill="#0000ff"/><rect x="464" y="19" width="2" height="2" fill="#0000ff"/><rect x="340.5" y="15.5" width="10" height="4" rx="1" fill="#fff" stroke="#4a4a58" shape-rendering="geometricPrecision"/><rect x="374.5" y="11.5" width="10" height="8" rx="1" fill="#fff" stroke="#4a4a58" shape-rendering="geometricPrecision"/><rect x="377.5" y="14.5" width="4" height="2" fill="#9db4d0" stroke="#4a4a58" shape-rendering="geometricPrecision"/><path d="M408.5,11.5 L411.5,11.5 L413.5,13.7 L415.5,11.5 L418.5,11.5 L415.4,15.5 L418.5,19.5 L415.5,19.5 L413.5,17.3 L411.5,19.5 L408.5,19.5 L411.6,15.5 Z" fill="#fff" stroke="#4a4a58" stroke-width="1" shape-rendering="geometricPrecision"/><rect x="1409.5" y="17.5" width="10" height="4" rx="1" fill="#fff" stroke="#3a3a48" shape-rendering="geometricPrecision"/><rect x="1443.5" y="13.5" width="10" height="8" rx="1" fill="#fff" stroke="#3a3a48" shape-rendering="geometricPrecision"/><rect x="1446.5" y="16.5" width="4" height="2" fill="#9db4d0" stroke="#3a3a48" shape-rendering="geometricPrecision"/><path d="M1477.5,13.5 L1480.5,13.5 L1482.5,15.7 L1484.5,13.5 L1487.5,13.5 L1484.4,17.5 L1487.5,21.5 L1484.5,21.5 L1482.5,19.3 L1480.5,21.5 L1477.5,21.5 L1480.6,17.5 Z" fill="#fff" stroke="#3a3a48" stroke-width="1" shape-rendering="geometricPrecision"/><rect x="29" y="824" width="5" height="1" fill="#000000"/><rect x="30" y="825" width="3" height="1" fill="#000000"/><rect x="31" y="826" width="1" height="1" fill="#000000"/><rect x="17" y="832" width="6" height="1" fill="#696969"/><rect x="17" y="831" width="6" height="1" fill="#a0a0a0"/><rect x="43" y="820" width="1" height="9" fill="#000000"/><rect x="45" y="824" width="1" height="1" fill="#000000"/><rect x="46" y="823" width="1" height="3" fill="#000000"/><rect x="47" y="822" width="1" height="5" fill="#000000"/><rect x="48" y="821" width="1" height="7" fill="#000000"/><rect x="49" y="820" width="1" height="9" fill="#000000"/><rect x="61" y="824" width="1" height="1" fill="#000000"/><rect x="62" y="823" width="1" height="3" fill="#000000"/><rect x="63" y="822" width="1" height="5" fill="#000000"/><rect x="64" y="821" width="1" height="7" fill="#000000"/><rect x="65" y="820" width="1" height="9" fill="#000000"/><rect x="77" y="820" width="1" height="9" fill="#000000"/><rect x="78" y="821" width="1" height="7" fill="#000000"/><rect x="79" y="822" width="1" height="5" fill="#000000"/><rect x="80" y="823" width="1" height="3" fill="#000000"/><rect x="81" y="824" width="1" height="1" fill="#000000"/><rect x="93" y="820" width="1" height="9" fill="#000000"/><rect x="94" y="821" width="1" height="7" fill="#000000"/><rect x="95" y="822" width="1" height="5" fill="#000000"/><rect x="96" y="823" width="1" height="3" fill="#000000"/><rect x="97" y="824" width="1" height="1" fill="#000000"/><rect x="99" y="820" width="1" height="9" fill="#000000"/><polygon points="104,816 112,833 141,833 149,816" fill="#ffffff"/><polyline points="104.5,816.5 112.5,832.5 140.5,832.5 148.5,816.5 413.5,816.5" fill="none" stroke="#000000" stroke-width="1" shape-rendering="geometricPrecision"/><text x="113" y="828" font-family="Liberation Sans" font-size="12" font-weight="bold" fill="#000000" text-anchor="start" textLength="26" lengthAdjust="spacingAndGlyphs">Main</text><rect x="413" y="816" width="17" height="7" fill="#f0f0f0"/><rect x="413" y="816" width="17" height="1" fill="#696969"/><rect x="413" y="822" width="17" height="1" fill="#696969"/><rect x="413" y="816" width="1" height="7" fill="#696969"/><rect x="429" y="816" width="1" height="7" fill="#696969"/><rect x="413" y="816" width="16" height="1" fill="#ffffff"/><rect x="413" y="816" width="1" height="6" fill="#ffffff"/><rect x="462" y="827" width="1" height="9" fill="#000000"/><rect x="464" y="831" width="1" height="1" fill="#000000"/><rect x="465" y="830" width="1" height="3" fill="#000000"/><rect x="466" y="829" width="1" height="5" fill="#000000"/><rect x="467" y="828" width="1" height="7" fill="#000000"/><rect x="468" y="827" width="1" height="9" fill="#000000"/><rect x="480" y="831" width="1" height="1" fill="#000000"/><rect x="481" y="830" width="1" height="3" fill="#000000"/><rect x="482" y="829" width="1" height="5" fill="#000000"/><rect x="483" y="828" width="1" height="7" fill="#000000"/><rect x="484" y="827" width="1" height="9" fill="#000000"/><rect x="496" y="827" width="1" height="9" fill="#000000"/><rect x="497" y="828" width="1" height="7" fill="#000000"/><rect x="498" y="829" width="1" height="5" fill="#000000"/><rect x="499" y="830" width="1" height="3" fill="#000000"/><rect x="500" y="831" width="1" height="1" fill="#000000"/><rect x="512" y="827" width="1" height="9" fill="#000000"/><rect x="513" y="828" width="1" height="7" fill="#000000"/><rect x="514" y="829" width="1" height="5" fill="#000000"/><rect x="515" y="830" width="1" height="3" fill="#000000"/><rect x="516" y="831" width="1" height="1" fill="#000000"/><rect x="518" y="827" width="1" height="9" fill="#000000"/><polygon points="523,823 531,840 560,840 568,823" fill="#ffffff"/><polyline points="523.5,823.5 531.5,839.5 559.5,839.5 567.5,823.5 884.5,823.5" fill="none" stroke="#000000" stroke-width="1" shape-rendering="geometricPrecision"/><polyline points="563.5,831.5 567.5,839.5" fill="none" stroke="#000000" stroke-width="1" shape-rendering="geometricPrecision"/><polyline points="594.5,823.5 601.5,839.5" fill="none" stroke="#000000" stroke-width="1" shape-rendering="geometricPrecision"/><polyline points="598.0,831.5 594.0,839.5" fill="none" stroke="#000000" stroke-width="1" shape-rendering="geometricPrecision"/><polyline points="643.5,823.5 650.5,839.5" fill="none" stroke="#000000" stroke-width="1" shape-rendering="geometricPrecision"/><polyline points="647.0,831.5 643.0,839.5" fill="none" stroke="#000000" stroke-width="1" shape-rendering="geometricPrecision"/><polyline points="739.0,823.5 746.0,839.5" fill="none" stroke="#000000" stroke-width="1" shape-rendering="geometricPrecision"/><polyline points="742.5,831.5 738.5,839.5" fill="none" stroke="#000000" stroke-width="1" shape-rendering="geometricPrecision"/><polyline points="776.5,823.5 769.5,839.5" fill="none" stroke="#000000" stroke-width="1" shape-rendering="geometricPrecision"/><text x="532" y="835" font-family="Liberation Sans" font-size="12" font-weight="bold" fill="#000000" text-anchor="start" textLength="26" lengthAdjust="spacingAndGlyphs">Main</text><text x="570" y="835" font-family="Liberation Sans" font-size="12" font-weight="normal" fill="#000000" text-anchor="start" textLength="19" lengthAdjust="spacingAndGlyphs">Text</text><text x="604" y="835" font-family="Liberation Sans" font-size="12" font-weight="normal" fill="#000000" text-anchor="start" textLength="33.5" lengthAdjust="spacingAndGlyphs">Models</text><text x="657" y="835" font-family="Liberation Sans" font-size="12" font-weight="normal" fill="#000000" text-anchor="start" textLength="72" lengthAdjust="spacingAndGlyphs">Power Supplies</text><text x="748" y="835" font-family="Liberation Sans" font-size="12" font-weight="normal" fill="#000000" text-anchor="start" textLength="17" lengthAdjust="spacingAndGlyphs">Info</text><rect x="880" y="823" width="1" height="16" fill="#000000"/><rect x="881" y="823" width="2" height="16" fill="#ffffff"/><rect x="883" y="823" width="1" height="16" fill="#a0a0a0"/><rect x="884" y="823" width="1" height="16" fill="#696969"/><rect x="880" y="823" width="5" height="1" fill="#000000"/><rect x="1491" y="100" width="1" height="1" fill="#000000"/><rect x="1490" y="101" width="3" height="1" fill="#000000"/><rect x="1489" y="102" width="5" height="1" fill="#000000"/><rect x="1488" y="103" width="7" height="1" fill="#000000"/><rect x="1488" y="814" width="7" height="1" fill="#000000"/><rect x="1489" y="815" width="5" height="1" fill="#000000"/><rect x="1490" y="816" width="3" height="1" fill="#000000"/><rect x="1491" y="817" width="1" height="1" fill="#000000"/><rect x="891" y="831" width="1" height="1" fill="#000000"/><rect x="892" y="830" width="1" height="3" fill="#000000"/><rect x="893" y="829" width="1" height="5" fill="#000000"/><rect x="894" y="828" width="1" height="7" fill="#000000"/><rect x="1474" y="828" width="1" height="7" fill="#000000"/><rect x="1475" y="829" width="1" height="5" fill="#000000"/><rect x="1476" y="830" width="1" height="3" fill="#000000"/><rect x="1477" y="831" width="1" height="1" fill="#000000"/></g>
</svg>
</body></html>
